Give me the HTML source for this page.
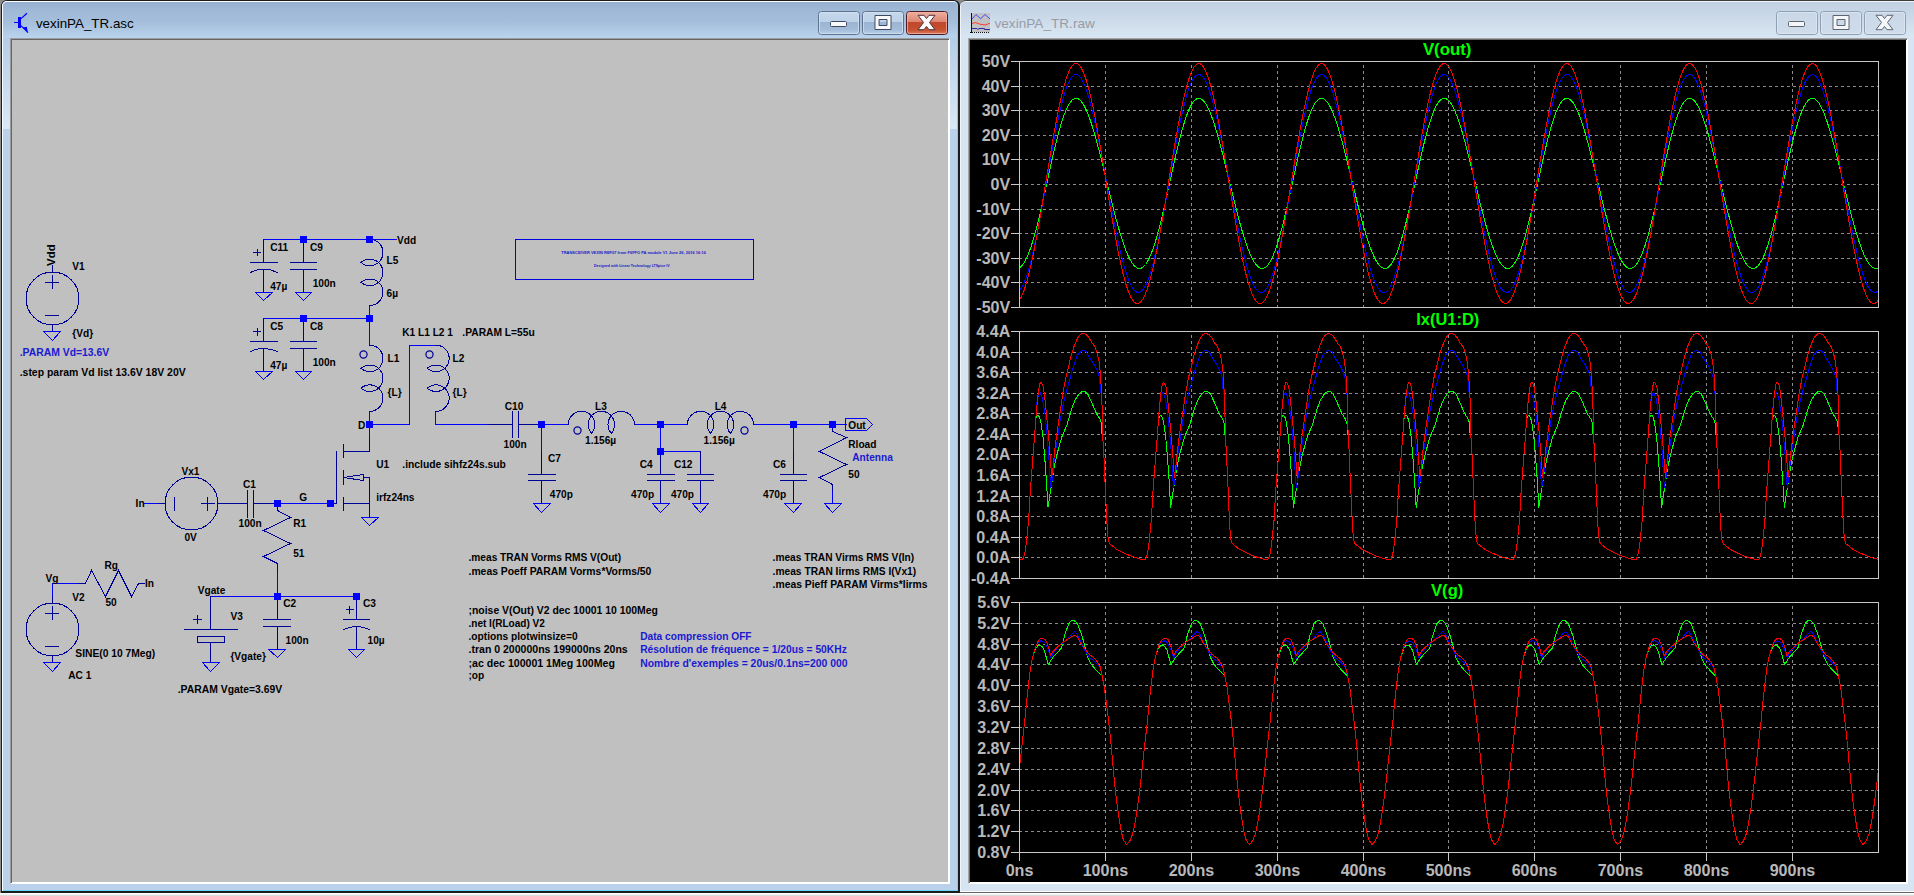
<!DOCTYPE html>
<html lang="en"><head><meta charset="utf-8"><title>vexinPA_TR - LTspice</title>
<style>
html,body{margin:0;padding:0}
body{width:1914px;height:896px;overflow:hidden;position:relative;background:#8c8c8c;font-family:"Liberation Sans",Arial,sans-serif}
.abs{position:absolute;box-sizing:border-box}
#strip{left:0;top:893px;width:1914px;height:3px;background:linear-gradient(#fff 0,#fff 34%,#f2f2f2 34%,#f2f2f2 67%,#dadada 67%)}
#lw{left:1px;top:0;width:959px;height:893px;background:#1c1c1c;border-radius:6px 6px 0 0}
#lwin{left:2px;top:1px;width:956px;height:890px;background:#b9d1ea;border-radius:5px 5px 0 0;box-shadow:inset 1px 1px 0 #fbfdff, inset -1px -1px 0 #62d8f4}
#ltitle{left:3px;top:2px;width:954px;height:36px;background:linear-gradient(#97b1d0 0,#9fb9d7 25%,#a3bdda 52%,#aec7e3 76%,#bad3ee 100%);border-radius:4px 4px 0 0}
.lgrad{top:38px;width:7px;height:91px;background:linear-gradient(#b4cde8,#dbe8f5)}
#lclient{left:10px;top:38px;width:940px;height:846px;background:#c0c0c0;border-style:solid;border-width:1px;border-color:#9c9c9c #fff #fff #9c9c9c;box-shadow:inset 1px 1px 0 #666, inset -1px -1px 0 #fff}
#rw{left:960px;top:0;width:954px;height:893px;background:#d7e4f2;border-top:1px solid #3c3c3c;border-bottom:1px solid #666;border-radius:6px 0 0 0;box-shadow:inset 1px 1px 0 #eff4fa, inset 0 -1px 0 #fff}
#rtitle{left:961px;top:2px;width:953px;height:36px;background:linear-gradient(#c2d1e2 0,#c9d7e7 35%,#d5e2ef 80%,#d8e5f2 100%);border-radius:4px 0 0 0}
#rclient{left:968px;top:38px;width:940px;height:846px;background:#000;border-style:solid;border-width:1px;border-color:#a4a4a4 #fff #fff #a4a4a4;box-shadow:inset 1px 1px 0 #6a6a6a, inset -1px -1px 0 #fff}
svg{position:absolute;left:0;top:0}
</style></head>
<body>
<div class="abs" id="strip"></div>
<div class="abs" id="lw"></div><div class="abs" id="lwin"></div><div class="abs" id="ltitle"></div><div class="abs lgrad" style="left:3px"></div><div class="abs lgrad" style="left:950px"></div><div class="abs" id="lclient"></div>
<div class="abs" id="rw"></div><div class="abs" id="rtitle"></div><div class="abs" id="rclient"></div>
<svg width="1914" height="896" viewBox="0 0 1914 896">
<defs>
<linearGradient id="g_min_a" x1="0" y1="0" x2="0" y2="1"><stop offset="0" stop-color="#c5d8ec"/><stop offset=".44" stop-color="#bdd1e8"/><stop offset=".45" stop-color="#9bb4d2"/><stop offset=".8" stop-color="#a3bcd9"/><stop offset="1" stop-color="#bdd3ea"/></linearGradient>
<linearGradient id="g_max_a" x1="0" y1="0" x2="0" y2="1"><stop offset="0" stop-color="#c5d8ec"/><stop offset=".44" stop-color="#bdd1e8"/><stop offset=".45" stop-color="#9bb4d2"/><stop offset=".8" stop-color="#a3bcd9"/><stop offset="1" stop-color="#bdd3ea"/></linearGradient>
<linearGradient id="g_close_a" x1="0" y1="0" x2="0" y2="1"><stop offset="0" stop-color="#eeb0a0"/><stop offset=".44" stop-color="#dc8672"/><stop offset=".45" stop-color="#c0462c"/><stop offset=".8" stop-color="#c5502f"/><stop offset="1" stop-color="#dc8064"/></linearGradient>
<linearGradient id="g_min_i" x1="0" y1="0" x2="0" y2="1"><stop offset="0" stop-color="#c9d7e7"/><stop offset="1" stop-color="#cfdcea"/></linearGradient>
<linearGradient id="g_max_i" x1="0" y1="0" x2="0" y2="1"><stop offset="0" stop-color="#c9d7e7"/><stop offset="1" stop-color="#cfdcea"/></linearGradient>
<linearGradient id="g_close_i" x1="0" y1="0" x2="0" y2="1"><stop offset="0" stop-color="#c9d7e7"/><stop offset="1" stop-color="#cfdcea"/></linearGradient>
</defs>
<g id="chrome">
<rect x="818.5" y="11.5" width="41" height="23" rx="3" fill="url(#g_min_a)" stroke="#5e7390"/>
<rect x="819.5" y="12.5" width="39" height="21" rx="2" fill="none" stroke="#d4e3f3" stroke-opacity=".75"/>
<rect x="830.5" y="21.5" width="16" height="5" rx="1" fill="#fafafa" stroke="#3e4a63" stroke-width="1"/>
<rect x="862.5" y="11.5" width="41" height="23" rx="3" fill="url(#g_max_a)" stroke="#5e7390"/>
<rect x="863.5" y="12.5" width="39" height="21" rx="2" fill="none" stroke="#d4e3f3" stroke-opacity=".75"/>
<path d="M875 15.5h16v14h-16z M879 19.5v6h8v-6z" fill="#fafafa" fill-rule="evenodd" stroke="#3e4a63" stroke-width="1"/>
<rect x="906.5" y="11.5" width="41" height="23" rx="3" fill="url(#g_close_a)" stroke="#4a1d26"/>
<rect x="907.5" y="12.5" width="39" height="21" rx="2" fill="none" stroke="#f0b4a4" stroke-opacity=".75"/>
<path d="M918 15.3 L924 15.3 L926.5 18.57 L929 15.3 L935 15.3 L929.5 22.5 L935 29.7 L929 29.7 L926.5 26.43 L924 29.7 L918 29.7 L923.5 22.5 Z" fill="#fafafa" stroke="#4b3340" stroke-width="1" stroke-linejoin="round"/>
<rect x="1776.5" y="11.5" width="41" height="23" rx="3" fill="url(#g_min_i)" stroke="#8f9fb3"/>
<rect x="1777.5" y="12.5" width="39" height="21" rx="2" fill="none" stroke="#dfe9f4" stroke-opacity=".75"/>
<rect x="1788.5" y="21.5" width="16" height="5" rx="1" fill="#f4f6f8" stroke="#5a6472" stroke-width="1"/>
<rect x="1820.5" y="11.5" width="41" height="23" rx="3" fill="url(#g_max_i)" stroke="#8f9fb3"/>
<rect x="1821.5" y="12.5" width="39" height="21" rx="2" fill="none" stroke="#dfe9f4" stroke-opacity=".75"/>
<path d="M1833 15.5h16v14h-16z M1837 19.5v6h8v-6z" fill="#f4f6f8" fill-rule="evenodd" stroke="#5a6472" stroke-width="1"/>
<rect x="1864.5" y="11.5" width="41" height="23" rx="3" fill="url(#g_close_i)" stroke="#8f9fb3"/>
<rect x="1865.5" y="12.5" width="39" height="21" rx="2" fill="none" stroke="#dfe9f4" stroke-opacity=".75"/>
<path d="M1876 15.3 L1882 15.3 L1884.5 18.57 L1887 15.3 L1893 15.3 L1887.5 22.5 L1893 29.7 L1887 29.7 L1884.5 26.43 L1882 29.7 L1876 29.7 L1881.5 22.5 Z" fill="#f4f6f8" stroke="#5a6472" stroke-width="1" stroke-linejoin="round"/>
<g stroke="#0000ff" fill="#0000ff" shape-rendering="crispEdges"><rect x="18" y="17" width="3.4" height="10.5" stroke="none"/><line x1="14" y1="22.5" x2="18" y2="22.5" stroke-width="1.2"/></g><g stroke="#0000ff" fill="#0000ff"><line x1="21" y1="18.6" x2="27" y2="13.2" stroke-width="1.2"/><line x1="21" y1="25.6" x2="28" y2="32.6" stroke-width="1.2"/><path d="M22.6 27.6 L26.8 26.8 L27.8 31.8 Z" stroke="none"/></g>
<g shape-rendering="crispEdges"><rect x="971" y="13" width="19" height="19" fill="#c2c2c2"/><line x1="971.5" y1="13" x2="971.5" y2="33" stroke="#111"/><line x1="970" y1="32.5" x2="990" y2="32.5" stroke="#111" stroke-dasharray="1 1"/></g><polyline points="972,19 976,14.5 980.5,18.8 985,14.5 990,19" fill="none" stroke="#4646ff" stroke-width="1"/><polyline points="972,23.5 975.5,22.5 980,24.2 985,25 990,23.2" fill="none" stroke="#ff3c3c" stroke-width="1"/><polyline points="972,28.5 977,28.5 977.8,29.5 979,28.5 984.5,28.5 984.5,29.5 990,29.5" fill="none" stroke="#2a2aa8" stroke-width="1"/>
<g font-family="'Liberation Sans',Arial,sans-serif" font-size="13.5"><text x="35.9" y="28.3" fill="#000" textLength="97.8" lengthAdjust="spacingAndGlyphs">vexinPA_TR.asc</text><text x="994.5" y="28.3" fill="#969ca6" textLength="100.3" lengthAdjust="spacingAndGlyphs">vexinPA_TR.raw</text></g>
</g>
<g id="schematic">
<g fill="none" stroke-width="1" stroke-linecap="square" shape-rendering="crispEdges">
<polyline points="263.5,239.5 396.5,239.5" stroke="#0000ff" fill="none"/>
<polyline points="263.5,318.5 369.5,318.5" stroke="#0000ff" fill="none"/>
<polyline points="369.5,305.5 369.5,345.5" stroke="#0000ff" fill="none"/>
<polyline points="369.5,411.5 369.5,437.5" stroke="#0000ff" fill="none"/>
<polyline points="369.5,424.5 409.5,424.5 409.5,345.5 435.5,345.5" stroke="#0000ff" fill="none"/>
<polyline points="435.5,411.5 435.5,424.5 488.5,424.5" stroke="#0000ff" fill="none"/>
<polyline points="541.5,424.5 568.5,424.5" stroke="#0000ff" fill="none"/>
<polyline points="541.5,424.5 541.5,451.5" stroke="#0000ff" fill="none"/>
<polyline points="634.5,424.5 687.5,424.5" stroke="#0000ff" fill="none"/>
<polyline points="660.5,424.5 660.5,451.5" stroke="#0000ff" fill="none"/>
<polyline points="660.5,451.5 700.5,451.5" stroke="#0000ff" fill="none"/>
<polyline points="753.5,424.5 846.5,424.5" stroke="#0000ff" fill="none"/>
<polyline points="793.5,424.5 793.5,451.5" stroke="#0000ff" fill="none"/>
<polyline points="832.5,490.5 832.5,503.5" stroke="#0000ff" fill="none"/>
<polyline points="277.5,503.5 330.5,503.5" stroke="#0000ff" fill="none"/>
<polyline points="277.5,570.5 277.5,596.5" stroke="#0000ff" fill="none"/>
<polyline points="210.5,596.5 356.5,596.5" stroke="#0000ff" fill="none"/>
<polyline points="52.5,596.5 52.5,583.5 78.5,583.5" stroke="#0000ff" fill="none"/>
<polyline points="144.5,503.5 158.5,503.5" stroke="#0000ff" fill="none"/>
<line x1="250.5" y1="262.5" x2="277.5" y2="262.5" stroke="#000098"/>
<line x1="263.5" y1="239.5" x2="263.5" y2="262.5" stroke="#000098"/>
<line x1="263.5" y1="269.5" x2="263.5" y2="292.5" stroke="#000098"/>
<line x1="253.5" y1="252.5" x2="260.5" y2="252.5" stroke="#000098"/>
<line x1="257.5" y1="249.5" x2="257.5" y2="255.5" stroke="#000098"/>
<path d="M 250.5 272.5 Q 263.5 265.5 277.5 272.5" stroke="#000098" fill="none"/>
<line x1="303.5" y1="269.5" x2="303.5" y2="292.5" stroke="#000098"/>
<line x1="303.5" y1="262.5" x2="303.5" y2="239.5" stroke="#000098"/>
<line x1="290.5" y1="262.5" x2="316.5" y2="262.5" stroke="#000098"/>
<line x1="290.5" y1="269.5" x2="316.5" y2="269.5" stroke="#000098"/>
<line x1="250.5" y1="341.5" x2="277.5" y2="341.5" stroke="#000098"/>
<line x1="263.5" y1="318.5" x2="263.5" y2="341.5" stroke="#000098"/>
<line x1="263.5" y1="348.5" x2="263.5" y2="371.5" stroke="#000098"/>
<line x1="253.5" y1="331.5" x2="260.5" y2="331.5" stroke="#000098"/>
<line x1="257.5" y1="328.5" x2="257.5" y2="335.5" stroke="#000098"/>
<path d="M 250.5 351.5 Q 263.5 345.5 277.5 351.5" stroke="#000098" fill="none"/>
<line x1="303.5" y1="348.5" x2="303.5" y2="371.5" stroke="#000098"/>
<line x1="303.5" y1="341.5" x2="303.5" y2="318.5" stroke="#000098"/>
<line x1="290.5" y1="341.5" x2="316.5" y2="341.5" stroke="#000098"/>
<line x1="290.5" y1="348.5" x2="316.5" y2="348.5" stroke="#000098"/>
<path d="M369.77 239.3 L371.59 239.43 L373.38 239.8 L375.09 240.42 L376.71 241.27 L378.19 242.33 L379.52 243.58 L380.66 245.01 L381.59 246.58 L382.29 248.26 L382.76 250.03 L382.98 251.84 L382.95 253.66 L382.67 255.46 L382.15 257.21 L381.39 258.87 L380.4 260.41 L379.22 261.8 L377.86 263.01 L376.34 264.02 L374.69 264.82 L372.96 265.38 L371.16 265.69 L369.34 265.76 L367.52 265.57 L365.75 265.14 L364.05 264.47 L362.46 263.57 L361.02 262.46" stroke="#000098" fill="none"/>
<path d="M361.02 262.46 L362.75 261.16 L364.68 260.17 L366.74 259.5 L368.88 259.18 L371.04 259.21 L373.17 259.6 L375.21 260.32 L377.11 261.37 L378.81 262.72 L380.26 264.32 L381.44 266.14 L382.3 268.13 L382.83 270.23 L383 272.38 L382.83 274.54 L382.3 276.64 L381.44 278.63 L380.26 280.45 L378.81 282.05 L377.11 283.4 L375.21 284.45 L373.17 285.17 L371.04 285.56 L368.88 285.59 L366.74 285.27 L364.68 284.6 L362.75 283.6 L361.02 282.31" stroke="#000098" fill="none"/>
<path d="M361.02 282.31 L362.46 281.2 L364.05 280.3 L365.75 279.63 L367.52 279.19 L369.34 279.01 L371.16 279.07 L372.96 279.39 L374.69 279.95 L376.34 280.75 L377.86 281.76 L379.22 282.97 L380.4 284.36 L381.39 285.9 L382.15 287.56 L382.67 289.3 L382.95 291.11 L382.98 292.93 L382.76 294.74 L382.29 296.51 L381.59 298.19 L380.66 299.76 L379.52 301.18 L378.19 302.44 L376.71 303.5 L375.09 304.35 L373.38 304.97 L371.59 305.34 L369.77 305.47" stroke="#000098" fill="none"/>
<path d="M369.77 345.17 L371.59 345.29 L373.38 345.67 L375.09 346.29 L376.71 347.13 L378.19 348.2 L379.52 349.45 L380.66 350.88 L381.59 352.45 L382.29 354.13 L382.76 355.89 L382.98 357.71 L382.95 359.53 L382.67 361.33 L382.15 363.08 L381.39 364.74 L380.4 366.28 L379.22 367.67 L377.86 368.88 L376.34 369.89 L374.69 370.69 L372.96 371.25 L371.16 371.56 L369.34 371.63 L367.52 371.44 L365.75 371.01 L364.05 370.34 L362.46 369.44 L361.02 368.33" stroke="#000098" fill="none"/>
<path d="M361.02 368.33 L362.75 367.03 L364.68 366.04 L366.74 365.37 L368.88 365.05 L371.04 365.08 L373.17 365.46 L375.21 366.19 L377.11 367.24 L378.81 368.59 L380.26 370.19 L381.44 372.01 L382.3 373.99 L382.83 376.09 L383 378.25 L382.83 380.41 L382.3 382.51 L381.44 384.5 L380.26 386.32 L378.81 387.92 L377.11 389.26 L375.21 390.31 L373.17 391.04 L371.04 391.42 L368.88 391.46 L366.74 391.13 L364.68 390.47 L362.75 389.47 L361.02 388.18" stroke="#000098" fill="none"/>
<path d="M361.02 388.18 L362.46 387.07 L364.05 386.17 L365.75 385.5 L367.52 385.06 L369.34 384.88 L371.16 384.94 L372.96 385.26 L374.69 385.82 L376.34 386.61 L377.86 387.63 L379.22 388.84 L380.4 390.23 L381.39 391.77 L382.15 393.42 L382.67 395.17 L382.95 396.98 L382.98 398.8 L382.76 400.61 L382.29 402.38 L381.59 404.06 L380.66 405.63 L379.52 407.05 L378.19 408.31 L376.71 409.37 L375.09 410.22 L373.38 410.84 L371.59 411.21 L369.77 411.34" stroke="#000098" fill="none"/>
<circle cx="363.5" cy="354.5" r="3.56" stroke="#000098" fill="none" shape-rendering="geometricPrecision" stroke-width="1.25"/>
<path d="M435.94 345.17 L437.76 345.29 L439.54 345.67 L441.26 346.29 L442.88 347.13 L444.36 348.2 L445.69 349.45 L446.82 350.88 L447.76 352.45 L448.46 354.13 L448.93 355.89 L449.15 357.71 L449.12 359.53 L448.84 361.33 L448.32 363.08 L447.55 364.74 L446.57 366.28 L445.39 367.67 L444.02 368.88 L442.51 369.89 L440.86 370.69 L439.13 371.25 L437.33 371.56 L435.5 371.63 L433.69 371.44 L431.92 371.01 L430.22 370.34 L428.63 369.44 L427.18 368.33" stroke="#000098" fill="none"/>
<path d="M427.18 368.33 L428.92 367.03 L430.84 366.04 L432.9 365.37 L435.05 365.05 L437.21 365.08 L439.34 365.46 L441.38 366.19 L443.28 367.24 L444.97 368.59 L446.43 370.19 L447.6 372.01 L448.47 373.99 L448.99 376.09 L449.17 378.25 L448.99 380.41 L448.47 382.51 L447.6 384.5 L446.43 386.32 L444.97 387.92 L443.28 389.26 L441.38 390.31 L439.34 391.04 L437.21 391.42 L435.05 391.46 L432.9 391.13 L430.84 390.47 L428.92 389.47 L427.18 388.18" stroke="#000098" fill="none"/>
<path d="M427.18 388.18 L428.63 387.07 L430.22 386.17 L431.92 385.5 L433.69 385.06 L435.5 384.88 L437.33 384.94 L439.13 385.26 L440.86 385.82 L442.51 386.61 L444.02 387.63 L445.39 388.84 L446.57 390.23 L447.55 391.77 L448.32 393.42 L448.84 395.17 L449.12 396.98 L449.15 398.8 L448.93 400.61 L448.46 402.38 L447.76 404.06 L446.82 405.63 L445.69 407.05 L444.36 408.31 L442.88 409.37 L441.26 410.22 L439.54 410.84 L437.76 411.21 L435.94 411.34" stroke="#000098" fill="none"/>
<circle cx="429.5" cy="354.5" r="3.56" stroke="#000098" fill="none" shape-rendering="geometricPrecision" stroke-width="1.25"/>
<line x1="518.5" y1="424.5" x2="541.5" y2="424.5" stroke="#000098"/>
<line x1="512.5" y1="424.5" x2="488.5" y2="424.5" stroke="#000098"/>
<line x1="512.5" y1="437.5" x2="512.5" y2="411.5" stroke="#000098"/>
<line x1="518.5" y1="437.5" x2="518.5" y2="411.5" stroke="#000098"/>
<line x1="541.5" y1="480.5" x2="541.5" y2="503.5" stroke="#000098"/>
<line x1="541.5" y1="474.5" x2="541.5" y2="451.5" stroke="#000098"/>
<line x1="528.5" y1="474.5" x2="555.5" y2="474.5" stroke="#000098"/>
<line x1="528.5" y1="480.5" x2="555.5" y2="480.5" stroke="#000098"/>
<path d="M568.27 424.57 L568.4 422.75 L568.77 420.96 L569.39 419.25 L570.24 417.63 L571.3 416.15 L572.56 414.82 L573.98 413.68 L575.55 412.75 L577.23 412.05 L579 411.58 L580.81 411.36 L582.63 411.38 L584.44 411.67 L586.19 412.19 L587.84 412.95 L589.38 413.94 L590.77 415.12 L591.98 416.48 L592.99 418 L593.79 419.65 L594.35 421.38 L594.67 423.18 L594.73 425 L594.55 426.82 L594.11 428.59 L593.44 430.29 L592.54 431.87 L591.43 433.32" stroke="#000098" fill="none"/>
<path d="M591.43 433.32 L590.14 431.59 L589.14 429.66 L588.48 427.6 L588.15 425.46 L588.18 423.3 L588.57 421.17 L589.3 419.13 L590.34 417.23 L591.69 415.53 L593.29 414.08 L595.11 412.9 L597.1 412.04 L599.2 411.51 L601.36 411.34 L603.52 411.51 L605.62 412.04 L607.6 412.9 L609.42 414.08 L611.02 415.53 L612.37 417.23 L613.42 419.13 L614.14 421.17 L614.53 423.3 L614.56 425.46 L614.24 427.6 L613.57 429.66 L612.58 431.59 L611.28 433.32" stroke="#000098" fill="none"/>
<path d="M611.28 433.32 L610.17 431.87 L609.27 430.29 L608.6 428.59 L608.17 426.82 L607.98 425 L608.05 423.18 L608.36 421.38 L608.92 419.65 L609.72 418 L610.73 416.48 L611.94 415.12 L613.33 413.94 L614.87 412.95 L616.53 412.19 L618.28 411.67 L620.08 411.38 L621.9 411.36 L623.72 411.58 L625.48 412.05 L627.16 412.75 L628.73 413.68 L630.16 414.82 L631.41 416.15 L632.47 417.63 L633.32 419.25 L633.94 420.96 L634.31 422.75 L634.44 424.57" stroke="#000098" fill="none"/>
<circle cx="577.5" cy="430.5" r="3.56" stroke="#000098" fill="none" shape-rendering="geometricPrecision" stroke-width="1.25"/>
<line x1="660.5" y1="480.5" x2="660.5" y2="503.5" stroke="#000098"/>
<line x1="660.5" y1="474.5" x2="660.5" y2="451.5" stroke="#000098"/>
<line x1="647.5" y1="474.5" x2="674.5" y2="474.5" stroke="#000098"/>
<line x1="647.5" y1="480.5" x2="674.5" y2="480.5" stroke="#000098"/>
<line x1="700.5" y1="480.5" x2="700.5" y2="503.5" stroke="#000098"/>
<line x1="700.5" y1="474.5" x2="700.5" y2="451.5" stroke="#000098"/>
<line x1="687.5" y1="474.5" x2="713.5" y2="474.5" stroke="#000098"/>
<line x1="687.5" y1="480.5" x2="713.5" y2="480.5" stroke="#000098"/>
<path d="M753.54 424.57 L753.42 422.75 L753.04 420.96 L752.43 419.25 L751.58 417.63 L750.52 416.15 L749.26 414.82 L747.83 413.68 L746.26 412.75 L744.58 412.05 L742.82 411.58 L741.01 411.36 L739.18 411.38 L737.38 411.67 L735.63 412.19 L733.97 412.95 L732.43 413.94 L731.05 415.12 L729.83 416.48 L728.82 418 L728.03 419.65 L727.47 421.38 L727.15 423.18 L727.08 425 L727.27 426.82 L727.7 428.59 L728.37 430.29 L729.27 431.87 L730.38 433.32" stroke="#000098" fill="none"/>
<path d="M730.38 433.32 L731.68 431.59 L732.67 429.66 L733.34 427.6 L733.66 425.46 L733.63 423.3 L733.25 421.17 L732.52 419.13 L731.47 417.23 L730.13 415.53 L728.52 414.08 L726.7 412.9 L724.72 412.04 L722.62 411.51 L720.46 411.34 L718.3 411.51 L716.2 412.04 L714.21 412.9 L712.39 414.08 L710.79 415.53 L709.45 417.23 L708.4 419.13 L707.67 421.17 L707.29 423.3 L707.26 425.46 L707.58 427.6 L708.25 429.66 L709.24 431.59 L710.53 433.32" stroke="#000098" fill="none"/>
<path d="M710.53 433.32 L711.64 431.87 L712.54 430.29 L713.22 428.59 L713.65 426.82 L713.84 425 L713.77 423.18 L713.45 421.38 L712.89 419.65 L712.1 418 L711.08 416.48 L709.87 415.12 L708.48 413.94 L706.95 412.95 L705.29 412.19 L703.54 411.67 L701.74 411.38 L699.91 411.36 L698.1 411.58 L696.34 412.05 L694.65 412.75 L693.09 413.68 L691.66 414.82 L690.4 416.15 L689.34 417.63 L688.49 419.25 L687.88 420.96 L687.5 422.75 L687.38 424.57" stroke="#000098" fill="none"/>
<circle cx="744.5" cy="430.5" r="3.56" stroke="#000098" fill="none" shape-rendering="geometricPrecision" stroke-width="1.25"/>
<line x1="793.5" y1="480.5" x2="793.5" y2="503.5" stroke="#000098"/>
<line x1="793.5" y1="474.5" x2="793.5" y2="451.5" stroke="#000098"/>
<line x1="780.5" y1="474.5" x2="806.5" y2="474.5" stroke="#000098"/>
<line x1="780.5" y1="480.5" x2="806.5" y2="480.5" stroke="#000098"/>
<polyline points="832.5,424.5 832.5,431.5 846.5,437.5 819.5,451.5 846.5,464.5 819.5,477.5 832.5,484.5 832.5,490.5" stroke="#000098" fill="none"/>
<line x1="369.5" y1="503.5" x2="369.5" y2="517.5" stroke="#000098"/>
<line x1="343.5" y1="503.5" x2="369.5" y2="503.5" stroke="#000098"/>
<line x1="369.5" y1="477.5" x2="369.5" y2="503.5" stroke="#000098"/>
<line x1="363.5" y1="477.5" x2="369.5" y2="477.5" stroke="#000098"/>
<line x1="343.5" y1="444.5" x2="343.5" y2="457.5" stroke="#000098"/>
<line x1="343.5" y1="470.5" x2="343.5" y2="484.5" stroke="#000098"/>
<line x1="343.5" y1="497.5" x2="343.5" y2="510.5" stroke="#000098"/>
<line x1="330.5" y1="503.5" x2="336.5" y2="503.5" stroke="#000098"/>
<line x1="336.5" y1="451.5" x2="336.5" y2="503.5" stroke="#000098"/>
<line x1="369.5" y1="451.5" x2="343.5" y2="451.5" stroke="#000098"/>
<line x1="369.5" y1="437.5" x2="369.5" y2="451.5" stroke="#000098"/>
<polygon points="343.5,477.5 363.5,474.5 363.5,480.5" stroke="#000098" fill="none"/>
<line x1="253.5" y1="503.5" x2="277.5" y2="503.5" stroke="#000098"/>
<line x1="247.5" y1="503.5" x2="224.5" y2="503.5" stroke="#000098"/>
<line x1="247.5" y1="517.5" x2="247.5" y2="490.5" stroke="#000098"/>
<line x1="253.5" y1="517.5" x2="253.5" y2="490.5" stroke="#000098"/>
<line x1="207.5" y1="497.5" x2="207.5" y2="510.5" stroke="#000098"/>
<line x1="174.5" y1="497.5" x2="174.5" y2="510.5" stroke="#000098"/>
<line x1="214.5" y1="503.5" x2="201.5" y2="503.5" stroke="#000098"/>
<line x1="158.5" y1="503.5" x2="164.5" y2="503.5" stroke="#000098"/>
<line x1="224.5" y1="503.5" x2="217.5" y2="503.5" stroke="#000098"/>
<circle cx="191.5" cy="503.5" r="26.47" stroke="#000098" fill="none"/>
<polyline points="277.5,503.5 277.5,510.5 290.5,517.5 263.5,530.5 290.5,543.5 263.5,556.5 277.5,563.5 277.5,570.5" stroke="#000098" fill="none"/>
<line x1="277.5" y1="626.5" x2="277.5" y2="649.5" stroke="#000098"/>
<line x1="277.5" y1="619.5" x2="277.5" y2="596.5" stroke="#000098"/>
<line x1="263.5" y1="619.5" x2="290.5" y2="619.5" stroke="#000098"/>
<line x1="263.5" y1="626.5" x2="290.5" y2="626.5" stroke="#000098"/>
<line x1="343.5" y1="619.5" x2="369.5" y2="619.5" stroke="#000098"/>
<line x1="356.5" y1="596.5" x2="356.5" y2="619.5" stroke="#000098"/>
<line x1="356.5" y1="626.5" x2="356.5" y2="649.5" stroke="#000098"/>
<line x1="346.5" y1="609.5" x2="353.5" y2="609.5" stroke="#000098"/>
<line x1="349.5" y1="606.5" x2="349.5" y2="613.5" stroke="#000098"/>
<path d="M 343.5 629.5 Q 356.5 623.5 369.5 629.5" stroke="#000098" fill="none"/>
<line x1="210.5" y1="596.5" x2="210.5" y2="629.5" stroke="#000098"/>
<line x1="184.5" y1="629.5" x2="237.5" y2="629.5" stroke="#000098"/>
<polygon points="197.5,636.5 224.5,636.5 224.5,642.5 197.5,642.5" stroke="#000098" fill="none"/>
<line x1="210.5" y1="642.5" x2="210.5" y2="662.5" stroke="#000098"/>
<line x1="193.5" y1="619.5" x2="201.5" y2="619.5" stroke="#000098"/>
<line x1="197.5" y1="615.5" x2="197.5" y2="623.5" stroke="#000098"/>
<line x1="45.5" y1="613.5" x2="58.5" y2="613.5" stroke="#000098"/>
<line x1="45.5" y1="646.5" x2="58.5" y2="646.5" stroke="#000098"/>
<line x1="52.5" y1="606.5" x2="52.5" y2="619.5" stroke="#000098"/>
<line x1="52.5" y1="662.5" x2="52.5" y2="656.5" stroke="#000098"/>
<line x1="52.5" y1="596.5" x2="52.5" y2="603.5" stroke="#000098"/>
<circle cx="52.5" cy="629.5" r="26.47" stroke="#000098" fill="none"/>
<polyline points="78.5,583.5 85.5,583.5 91.5,570.5 105.5,596.5 118.5,570.5 131.5,596.5 138.5,583.5 144.5,583.5" stroke="#000098" fill="none"/>
<line x1="45.5" y1="282.5" x2="58.5" y2="282.5" stroke="#000098"/>
<line x1="45.5" y1="315.5" x2="58.5" y2="315.5" stroke="#000098"/>
<line x1="52.5" y1="275.5" x2="52.5" y2="288.5" stroke="#000098"/>
<line x1="52.5" y1="331.5" x2="52.5" y2="325.5" stroke="#000098"/>
<line x1="52.5" y1="265.5" x2="52.5" y2="272.5" stroke="#000098"/>
<circle cx="52.5" cy="298.5" r="26.47" stroke="#000098" fill="none"/>
<polygon points="255.5,292.5 272.5,292.5 263.5,300.5" stroke="#0000ff" fill="none"/>
<polygon points="295.5,292.5 311.5,292.5 303.5,300.5" stroke="#0000ff" fill="none"/>
<polygon points="255.5,371.5 272.5,371.5 263.5,379.5" stroke="#0000ff" fill="none"/>
<polygon points="295.5,371.5 311.5,371.5 303.5,379.5" stroke="#0000ff" fill="none"/>
<polygon points="533.5,503.5 550.5,503.5 541.5,512.5" stroke="#0000ff" fill="none"/>
<polygon points="652.5,503.5 669.5,503.5 660.5,512.5" stroke="#0000ff" fill="none"/>
<polygon points="692.5,503.5 708.5,503.5 700.5,512.5" stroke="#0000ff" fill="none"/>
<polygon points="784.5,503.5 801.5,503.5 793.5,512.5" stroke="#0000ff" fill="none"/>
<polygon points="824.5,503.5 841.5,503.5 832.5,512.5" stroke="#0000ff" fill="none"/>
<polygon points="361.5,517.5 378.5,517.5 369.5,525.5" stroke="#0000ff" fill="none"/>
<polygon points="268.5,649.5 285.5,649.5 277.5,657.5" stroke="#0000ff" fill="none"/>
<polygon points="348.5,649.5 364.5,649.5 356.5,657.5" stroke="#0000ff" fill="none"/>
<polygon points="202.5,662.5 219.5,662.5 210.5,671.5" stroke="#0000ff" fill="none"/>
<polygon points="43.5,662.5 60.5,662.5 52.5,671.5" stroke="#0000ff" fill="none"/>
<polygon points="43.5,331.5 60.5,331.5 52.5,340.5" stroke="#0000ff" fill="none"/>
<rect x="300" y="236" width="7" height="7" fill="#0000ff" stroke="none"/>
<rect x="366" y="236" width="7" height="7" fill="#0000ff" stroke="none"/>
<rect x="300" y="315" width="7" height="7" fill="#0000ff" stroke="none"/>
<rect x="366" y="315" width="7" height="7" fill="#0000ff" stroke="none"/>
<rect x="366" y="421" width="7" height="7" fill="#0000ff" stroke="none"/>
<rect x="538" y="421" width="7" height="7" fill="#0000ff" stroke="none"/>
<rect x="657" y="421" width="7" height="7" fill="#0000ff" stroke="none"/>
<rect x="657" y="448" width="7" height="7" fill="#0000ff" stroke="none"/>
<rect x="790" y="421" width="7" height="7" fill="#0000ff" stroke="none"/>
<rect x="829" y="421" width="7" height="7" fill="#0000ff" stroke="none"/>
<rect x="274" y="500" width="7" height="7" fill="#0000ff" stroke="none"/>
<rect x="327" y="500" width="7" height="7" fill="#0000ff" stroke="none"/>
<rect x="274" y="593" width="7" height="7" fill="#0000ff" stroke="none"/>
<rect x="353" y="593" width="7" height="7" fill="#0000ff" stroke="none"/>
<polygon points="845.5,418.5 866.5,418.5 872.5,424.5 866.5,430.5 845.5,430.5" stroke="#0000ff" fill="none"/>
<rect x="515.5" y="239.5" width="238" height="40" stroke="#0000e0" stroke-width="1.4" fill="none"/>
</g>
<g font-family="'Liberation Sans',Arial,sans-serif" font-weight="bold" transform="translate(0,0.4)">
<text x="72.3" y="269.4" fill="#000" font-size="10.15" text-anchor="start">V1</text>
<text x="72.3" y="336.4" fill="#000" font-size="10.15" text-anchor="start">{Vd}</text>
<text x="19.7" y="355.2" fill="#1a1ad0" font-size="10.15" text-anchor="start" textLength="89.5" lengthAdjust="spacingAndGlyphs">.PARAM Vd=13.6V</text>
<text x="19.7" y="375.2" fill="#000" font-size="10.15" text-anchor="start" textLength="166" lengthAdjust="spacingAndGlyphs">.step param Vd list 13.6V 18V 20V</text>
<text transform="translate(54.6,265.5) rotate(-90)" fill="#000" font-size="10.15" textLength="21.5" lengthAdjust="spacingAndGlyphs">Vdd</text>
<text x="270.2" y="250.2" fill="#000" font-size="10.15" text-anchor="start">C11</text>
<text x="270.2" y="289.9" fill="#000" font-size="10.15" text-anchor="start">47µ</text>
<text x="309.9" y="250.2" fill="#000" font-size="10.15" text-anchor="start">C9</text>
<text x="312.7" y="286.3" fill="#000" font-size="10.15" text-anchor="start">100n</text>
<text x="397.1" y="243.2" fill="#000" font-size="10.15" text-anchor="start">Vdd</text>
<text x="386.6" y="263.3" fill="#000" font-size="10.15" text-anchor="start">L5</text>
<text x="386.6" y="296.4" fill="#000" font-size="10.15" text-anchor="start">6µ</text>
<text x="270.2" y="329.2" fill="#000" font-size="10.15" text-anchor="start">C5</text>
<text x="270.2" y="369.1" fill="#000" font-size="10.15" text-anchor="start">47µ</text>
<text x="309.9" y="329.2" fill="#000" font-size="10.15" text-anchor="start">C8</text>
<text x="312.7" y="365.3" fill="#000" font-size="10.15" text-anchor="start">100n</text>
<text x="402.3" y="336.1" fill="#000" font-size="10.15" text-anchor="start">K1 L1 L2 1</text>
<text x="462.3" y="336.1" fill="#000" font-size="10.15" text-anchor="start" textLength="72.5" lengthAdjust="spacingAndGlyphs">.PARAM L=55u</text>
<text x="387.6" y="361.3" fill="#000" font-size="10.15" text-anchor="start">L1</text>
<text x="387.6" y="395.3" fill="#000" font-size="10.15" text-anchor="start">{L}</text>
<text x="452.5" y="361.6" fill="#000" font-size="10.15" text-anchor="start">L2</text>
<text x="452.5" y="395.3" fill="#000" font-size="10.15" text-anchor="start">{L}</text>
<text x="358.1" y="428.3" fill="#000" font-size="10.15" text-anchor="start">D</text>
<text x="376.2" y="468" fill="#000" font-size="10.15" text-anchor="start">U1</text>
<text x="402.3" y="468" fill="#000" font-size="10.15" text-anchor="start" textLength="103.5" lengthAdjust="spacingAndGlyphs">.include sihfz24s.sub</text>
<text x="376.2" y="500.9" fill="#000" font-size="10.15" text-anchor="start">irfz24ns</text>
<text x="504.8" y="409.2" fill="#000" font-size="10.15" text-anchor="start">C10</text>
<text x="503.6" y="447.3" fill="#000" font-size="10.15" text-anchor="start">100n</text>
<text x="548" y="461.4" fill="#000" font-size="10.15" text-anchor="start">C7</text>
<text x="549.8" y="498.1" fill="#000" font-size="10.15" text-anchor="start">470p</text>
<text x="595" y="409.2" fill="#000" font-size="10.15" text-anchor="start">L3</text>
<text x="585" y="443.9" fill="#000" font-size="10.15" text-anchor="start">1.156µ</text>
<text x="639.8" y="468" fill="#000" font-size="10.15" text-anchor="start">C4</text>
<text x="631.1" y="498.1" fill="#000" font-size="10.15" text-anchor="start">470p</text>
<text x="673.9" y="468" fill="#000" font-size="10.15" text-anchor="start">C12</text>
<text x="670.9" y="498.1" fill="#000" font-size="10.15" text-anchor="start">470p</text>
<text x="714.7" y="409.2" fill="#000" font-size="10.15" text-anchor="start">L4</text>
<text x="703.6" y="443.9" fill="#000" font-size="10.15" text-anchor="start">1.156µ</text>
<text x="773" y="468" fill="#000" font-size="10.15" text-anchor="start">C6</text>
<text x="763" y="498.1" fill="#000" font-size="10.15" text-anchor="start">470p</text>
<text x="848.3" y="428.3" fill="#000" font-size="10.15" text-anchor="start">Out</text>
<text x="848.3" y="448.1" fill="#000" font-size="10.15" text-anchor="start">Rload</text>
<text x="852.3" y="461" fill="#1a1ad0" font-size="10.15" text-anchor="start">Antenna</text>
<text x="848.3" y="478.1" fill="#000" font-size="10.15" text-anchor="start">50</text>
<text x="181.4" y="474.9" fill="#000" font-size="10.15" text-anchor="start">Vx1</text>
<text x="184.4" y="540.3" fill="#000" font-size="10.15" text-anchor="start">0V</text>
<text x="135.6" y="507.1" fill="#000" font-size="10.15" text-anchor="start">In</text>
<text x="243" y="487.9" fill="#000" font-size="10.15" text-anchor="start">C1</text>
<text x="238.6" y="527.1" fill="#000" font-size="10.15" text-anchor="start">100n</text>
<text x="299.3" y="501" fill="#000" font-size="10.15" text-anchor="start">G</text>
<text x="293.2" y="526.7" fill="#000" font-size="10.15" text-anchor="start">R1</text>
<text x="293.2" y="556.8" fill="#000" font-size="10.15" text-anchor="start">51</text>
<text x="45.4" y="581.6" fill="#000" font-size="10.15" text-anchor="start">Vg</text>
<text x="104.4" y="568.2" fill="#000" font-size="10.15" text-anchor="start">Rg</text>
<text x="105.4" y="606" fill="#000" font-size="10.15" text-anchor="start">50</text>
<text x="72.3" y="600.4" fill="#000" font-size="10.15" text-anchor="start">V2</text>
<text x="145" y="587" fill="#000" font-size="10.15" text-anchor="start">In</text>
<text x="75.3" y="657.1" fill="#000" font-size="10.15" text-anchor="start" textLength="80" lengthAdjust="spacingAndGlyphs">SINE(0 10 7Meg)</text>
<text x="68.3" y="679.1" fill="#000" font-size="10.15" text-anchor="start">AC 1</text>
<text x="197.8" y="593.9" fill="#000" font-size="10.15" text-anchor="start">Vgate</text>
<text x="230.4" y="620.1" fill="#000" font-size="10.15" text-anchor="start">V3</text>
<text x="230.4" y="660.1" fill="#000" font-size="10.15" text-anchor="start">{Vgate}</text>
<text x="177.7" y="693.1" fill="#000" font-size="10.15" text-anchor="start" textLength="104.5" lengthAdjust="spacingAndGlyphs">.PARAM Vgate=3.69V</text>
<text x="283.2" y="607.1" fill="#000" font-size="10.15" text-anchor="start">C2</text>
<text x="285.6" y="643.6" fill="#000" font-size="10.15" text-anchor="start">100n</text>
<text x="363" y="607.1" fill="#000" font-size="10.15" text-anchor="start">C3</text>
<text x="367.6" y="643.2" fill="#000" font-size="10.15" text-anchor="start">10µ</text>
<text x="468.5" y="560.2" fill="#000" font-size="10.15" text-anchor="start" textLength="152.6" lengthAdjust="spacingAndGlyphs">.meas TRAN Vorms RMS V(Out)</text>
<text x="468.5" y="574.2" fill="#000" font-size="10.15" text-anchor="start" textLength="182.9" lengthAdjust="spacingAndGlyphs">.meas Poeff PARAM Vorms*Vorms/50</text>
<text x="468.5" y="613.4" fill="#000" font-size="10.15" text-anchor="start" textLength="189.4" lengthAdjust="spacingAndGlyphs">;noise V(Out) V2 dec 10001 10 100Meg</text>
<text x="468.5" y="626.4" fill="#000" font-size="10.15" text-anchor="start" textLength="76.3" lengthAdjust="spacingAndGlyphs">.net I(RLoad) V2</text>
<text x="468.5" y="640.1" fill="#000" font-size="10.15" text-anchor="start" textLength="109.2" lengthAdjust="spacingAndGlyphs">.options plotwinsize=0</text>
<text x="468.5" y="653.1" fill="#000" font-size="10.15" text-anchor="start" textLength="159.2" lengthAdjust="spacingAndGlyphs">.tran 0 200000ns 199000ns 20ns</text>
<text x="468.5" y="666.2" fill="#000" font-size="10.15" text-anchor="start" textLength="146.4" lengthAdjust="spacingAndGlyphs">;ac dec 100001 1Meg 100Meg</text>
<text x="468.5" y="679.1" fill="#000" font-size="10.15" text-anchor="start">;op</text>
<text x="640.2" y="640.1" fill="#1a1ad0" font-size="10.15" text-anchor="start" textLength="111.4" lengthAdjust="spacingAndGlyphs">Data compression OFF</text>
<text x="640.2" y="653.1" fill="#1a1ad0" font-size="10.15" text-anchor="start" textLength="206.6" lengthAdjust="spacingAndGlyphs">Résolution de fréquence = 1/20us = 50KHz</text>
<text x="640.2" y="666.2" fill="#1a1ad0" font-size="10.15" text-anchor="start" textLength="207.4" lengthAdjust="spacingAndGlyphs">Nombre d'exemples = 20us/0.1ns=200 000</text>
<text x="772.6" y="560.2" fill="#000" font-size="10.15" text-anchor="start" textLength="141.6" lengthAdjust="spacingAndGlyphs">.meas TRAN Virms RMS V(In)</text>
<text x="772.6" y="574.2" fill="#000" font-size="10.15" text-anchor="start" textLength="143.6" lengthAdjust="spacingAndGlyphs">.meas TRAN Iirms RMS I(Vx1)</text>
<text x="772.6" y="587.3" fill="#000" font-size="10.15" text-anchor="start" textLength="155" lengthAdjust="spacingAndGlyphs">.meas Pieff PARAM Virms*Iirms</text>
<text x="633.6" y="253.9" fill="#1818c8" font-size="3.95" text-anchor="middle" textLength="144.6" lengthAdjust="spacingAndGlyphs">TRANSCEIVER VEXIN REF07 from F6FFO  PA module  V1 June 26, 2016 16:16</text>
<text x="631.8" y="266.9" fill="#1818c8" font-size="3.95" text-anchor="middle" textLength="75.7" lengthAdjust="spacingAndGlyphs">Designed with Linear Technology LTSpice IV</text>
</g>
</g>
<g id="plots">
<defs><clipPath id="cp1"><rect x="1020" y="62" width="858" height="245"/></clipPath><clipPath id="cp2"><rect x="1020" y="332" width="858" height="246"/></clipPath><clipPath id="cp3"><rect x="1020" y="603" width="858" height="249"/></clipPath></defs>
<g shape-rendering="crispEdges" stroke-width="1"><line x1="1011" y1="61.5" x2="1019" y2="61.5" stroke="#c8c8c8"/>
<line x1="1019" y1="86.5" x2="1878" y2="86.5" stroke="#8c8c8c" stroke-dasharray="3 3"/>
<line x1="1011" y1="86.5" x2="1019" y2="86.5" stroke="#c8c8c8"/>
<line x1="1019" y1="110.5" x2="1878" y2="110.5" stroke="#8c8c8c" stroke-dasharray="3 3"/>
<line x1="1011" y1="110.5" x2="1019" y2="110.5" stroke="#c8c8c8"/>
<line x1="1019" y1="135.5" x2="1878" y2="135.5" stroke="#8c8c8c" stroke-dasharray="3 3"/>
<line x1="1011" y1="135.5" x2="1019" y2="135.5" stroke="#c8c8c8"/>
<line x1="1019" y1="159.5" x2="1878" y2="159.5" stroke="#8c8c8c" stroke-dasharray="3 3"/>
<line x1="1011" y1="159.5" x2="1019" y2="159.5" stroke="#c8c8c8"/>
<line x1="1019" y1="184.5" x2="1878" y2="184.5" stroke="#8c8c8c" stroke-dasharray="3 3"/>
<line x1="1011" y1="184.5" x2="1019" y2="184.5" stroke="#c8c8c8"/>
<line x1="1019" y1="209.5" x2="1878" y2="209.5" stroke="#8c8c8c" stroke-dasharray="3 3"/>
<line x1="1011" y1="209.5" x2="1019" y2="209.5" stroke="#c8c8c8"/>
<line x1="1019" y1="233.5" x2="1878" y2="233.5" stroke="#8c8c8c" stroke-dasharray="3 3"/>
<line x1="1011" y1="233.5" x2="1019" y2="233.5" stroke="#c8c8c8"/>
<line x1="1019" y1="258.5" x2="1878" y2="258.5" stroke="#8c8c8c" stroke-dasharray="3 3"/>
<line x1="1011" y1="258.5" x2="1019" y2="258.5" stroke="#c8c8c8"/>
<line x1="1019" y1="282.5" x2="1878" y2="282.5" stroke="#8c8c8c" stroke-dasharray="3 3"/>
<line x1="1011" y1="282.5" x2="1019" y2="282.5" stroke="#c8c8c8"/>
<line x1="1011" y1="307.5" x2="1019" y2="307.5" stroke="#c8c8c8"/>
<line x1="1105.5" y1="64.5" x2="1105.5" y2="307.5" stroke="#8c8c8c" stroke-dasharray="3 3"/>
<line x1="1191.5" y1="64.5" x2="1191.5" y2="307.5" stroke="#8c8c8c" stroke-dasharray="3 3"/>
<line x1="1277.5" y1="64.5" x2="1277.5" y2="307.5" stroke="#8c8c8c" stroke-dasharray="3 3"/>
<line x1="1363.5" y1="64.5" x2="1363.5" y2="307.5" stroke="#8c8c8c" stroke-dasharray="3 3"/>
<line x1="1448.5" y1="64.5" x2="1448.5" y2="307.5" stroke="#8c8c8c" stroke-dasharray="3 3"/>
<line x1="1534.5" y1="64.5" x2="1534.5" y2="307.5" stroke="#8c8c8c" stroke-dasharray="3 3"/>
<line x1="1620.5" y1="64.5" x2="1620.5" y2="307.5" stroke="#8c8c8c" stroke-dasharray="3 3"/>
<line x1="1706.5" y1="64.5" x2="1706.5" y2="307.5" stroke="#8c8c8c" stroke-dasharray="3 3"/>
<line x1="1792.5" y1="64.5" x2="1792.5" y2="307.5" stroke="#8c8c8c" stroke-dasharray="3 3"/>
<rect x="1019.5" y="61.5" width="859" height="246" stroke="#c8c8c8" fill="none"/>
<line x1="1011" y1="331.5" x2="1019" y2="331.5" stroke="#c8c8c8"/>
<line x1="1019" y1="352.5" x2="1878" y2="352.5" stroke="#8c8c8c" stroke-dasharray="3 3"/>
<line x1="1011" y1="352.5" x2="1019" y2="352.5" stroke="#c8c8c8"/>
<line x1="1019" y1="372.5" x2="1878" y2="372.5" stroke="#8c8c8c" stroke-dasharray="3 3"/>
<line x1="1011" y1="372.5" x2="1019" y2="372.5" stroke="#c8c8c8"/>
<line x1="1019" y1="393.5" x2="1878" y2="393.5" stroke="#8c8c8c" stroke-dasharray="3 3"/>
<line x1="1011" y1="393.5" x2="1019" y2="393.5" stroke="#c8c8c8"/>
<line x1="1019" y1="413.5" x2="1878" y2="413.5" stroke="#8c8c8c" stroke-dasharray="3 3"/>
<line x1="1011" y1="413.5" x2="1019" y2="413.5" stroke="#c8c8c8"/>
<line x1="1019" y1="434.5" x2="1878" y2="434.5" stroke="#8c8c8c" stroke-dasharray="3 3"/>
<line x1="1011" y1="434.5" x2="1019" y2="434.5" stroke="#c8c8c8"/>
<line x1="1019" y1="454.5" x2="1878" y2="454.5" stroke="#8c8c8c" stroke-dasharray="3 3"/>
<line x1="1011" y1="454.5" x2="1019" y2="454.5" stroke="#c8c8c8"/>
<line x1="1019" y1="475.5" x2="1878" y2="475.5" stroke="#8c8c8c" stroke-dasharray="3 3"/>
<line x1="1011" y1="475.5" x2="1019" y2="475.5" stroke="#c8c8c8"/>
<line x1="1019" y1="496.5" x2="1878" y2="496.5" stroke="#8c8c8c" stroke-dasharray="3 3"/>
<line x1="1011" y1="496.5" x2="1019" y2="496.5" stroke="#c8c8c8"/>
<line x1="1019" y1="516.5" x2="1878" y2="516.5" stroke="#8c8c8c" stroke-dasharray="3 3"/>
<line x1="1011" y1="516.5" x2="1019" y2="516.5" stroke="#c8c8c8"/>
<line x1="1019" y1="537.5" x2="1878" y2="537.5" stroke="#8c8c8c" stroke-dasharray="3 3"/>
<line x1="1011" y1="537.5" x2="1019" y2="537.5" stroke="#c8c8c8"/>
<line x1="1019" y1="557.5" x2="1878" y2="557.5" stroke="#8c8c8c" stroke-dasharray="3 3"/>
<line x1="1011" y1="557.5" x2="1019" y2="557.5" stroke="#c8c8c8"/>
<line x1="1011" y1="578.5" x2="1019" y2="578.5" stroke="#c8c8c8"/>
<line x1="1105.5" y1="334.5" x2="1105.5" y2="578.5" stroke="#8c8c8c" stroke-dasharray="3 3"/>
<line x1="1191.5" y1="334.5" x2="1191.5" y2="578.5" stroke="#8c8c8c" stroke-dasharray="3 3"/>
<line x1="1277.5" y1="334.5" x2="1277.5" y2="578.5" stroke="#8c8c8c" stroke-dasharray="3 3"/>
<line x1="1363.5" y1="334.5" x2="1363.5" y2="578.5" stroke="#8c8c8c" stroke-dasharray="3 3"/>
<line x1="1448.5" y1="334.5" x2="1448.5" y2="578.5" stroke="#8c8c8c" stroke-dasharray="3 3"/>
<line x1="1534.5" y1="334.5" x2="1534.5" y2="578.5" stroke="#8c8c8c" stroke-dasharray="3 3"/>
<line x1="1620.5" y1="334.5" x2="1620.5" y2="578.5" stroke="#8c8c8c" stroke-dasharray="3 3"/>
<line x1="1706.5" y1="334.5" x2="1706.5" y2="578.5" stroke="#8c8c8c" stroke-dasharray="3 3"/>
<line x1="1792.5" y1="334.5" x2="1792.5" y2="578.5" stroke="#8c8c8c" stroke-dasharray="3 3"/>
<rect x="1019.5" y="331.5" width="859" height="247" stroke="#c8c8c8" fill="none"/>
<line x1="1011" y1="602.5" x2="1019" y2="602.5" stroke="#c8c8c8"/>
<line x1="1019" y1="623.5" x2="1878" y2="623.5" stroke="#8c8c8c" stroke-dasharray="3 3"/>
<line x1="1011" y1="623.5" x2="1019" y2="623.5" stroke="#c8c8c8"/>
<line x1="1019" y1="644.5" x2="1878" y2="644.5" stroke="#8c8c8c" stroke-dasharray="3 3"/>
<line x1="1011" y1="644.5" x2="1019" y2="644.5" stroke="#c8c8c8"/>
<line x1="1019" y1="664.5" x2="1878" y2="664.5" stroke="#8c8c8c" stroke-dasharray="3 3"/>
<line x1="1011" y1="664.5" x2="1019" y2="664.5" stroke="#c8c8c8"/>
<line x1="1019" y1="685.5" x2="1878" y2="685.5" stroke="#8c8c8c" stroke-dasharray="3 3"/>
<line x1="1011" y1="685.5" x2="1019" y2="685.5" stroke="#c8c8c8"/>
<line x1="1019" y1="706.5" x2="1878" y2="706.5" stroke="#8c8c8c" stroke-dasharray="3 3"/>
<line x1="1011" y1="706.5" x2="1019" y2="706.5" stroke="#c8c8c8"/>
<line x1="1019" y1="727.5" x2="1878" y2="727.5" stroke="#8c8c8c" stroke-dasharray="3 3"/>
<line x1="1011" y1="727.5" x2="1019" y2="727.5" stroke="#c8c8c8"/>
<line x1="1019" y1="748.5" x2="1878" y2="748.5" stroke="#8c8c8c" stroke-dasharray="3 3"/>
<line x1="1011" y1="748.5" x2="1019" y2="748.5" stroke="#c8c8c8"/>
<line x1="1019" y1="769.5" x2="1878" y2="769.5" stroke="#8c8c8c" stroke-dasharray="3 3"/>
<line x1="1011" y1="769.5" x2="1019" y2="769.5" stroke="#c8c8c8"/>
<line x1="1019" y1="790.5" x2="1878" y2="790.5" stroke="#8c8c8c" stroke-dasharray="3 3"/>
<line x1="1011" y1="790.5" x2="1019" y2="790.5" stroke="#c8c8c8"/>
<line x1="1019" y1="810.5" x2="1878" y2="810.5" stroke="#8c8c8c" stroke-dasharray="3 3"/>
<line x1="1011" y1="810.5" x2="1019" y2="810.5" stroke="#c8c8c8"/>
<line x1="1019" y1="831.5" x2="1878" y2="831.5" stroke="#8c8c8c" stroke-dasharray="3 3"/>
<line x1="1011" y1="831.5" x2="1019" y2="831.5" stroke="#c8c8c8"/>
<line x1="1011" y1="852.5" x2="1019" y2="852.5" stroke="#c8c8c8"/>
<line x1="1105.5" y1="605.5" x2="1105.5" y2="852.5" stroke="#8c8c8c" stroke-dasharray="3 3"/>
<line x1="1191.5" y1="605.5" x2="1191.5" y2="852.5" stroke="#8c8c8c" stroke-dasharray="3 3"/>
<line x1="1277.5" y1="605.5" x2="1277.5" y2="852.5" stroke="#8c8c8c" stroke-dasharray="3 3"/>
<line x1="1363.5" y1="605.5" x2="1363.5" y2="852.5" stroke="#8c8c8c" stroke-dasharray="3 3"/>
<line x1="1448.5" y1="605.5" x2="1448.5" y2="852.5" stroke="#8c8c8c" stroke-dasharray="3 3"/>
<line x1="1534.5" y1="605.5" x2="1534.5" y2="852.5" stroke="#8c8c8c" stroke-dasharray="3 3"/>
<line x1="1620.5" y1="605.5" x2="1620.5" y2="852.5" stroke="#8c8c8c" stroke-dasharray="3 3"/>
<line x1="1706.5" y1="605.5" x2="1706.5" y2="852.5" stroke="#8c8c8c" stroke-dasharray="3 3"/>
<line x1="1792.5" y1="605.5" x2="1792.5" y2="852.5" stroke="#8c8c8c" stroke-dasharray="3 3"/>
<rect x="1019.5" y="602.5" width="859" height="250" stroke="#c8c8c8" fill="none"/>
<line x1="1019.5" y1="852.5" x2="1019.5" y2="861" stroke="#c8c8c8"/>
<line x1="1105.5" y1="852.5" x2="1105.5" y2="861" stroke="#c8c8c8"/>
<line x1="1191.5" y1="852.5" x2="1191.5" y2="861" stroke="#c8c8c8"/>
<line x1="1277.5" y1="852.5" x2="1277.5" y2="861" stroke="#c8c8c8"/>
<line x1="1363.5" y1="852.5" x2="1363.5" y2="861" stroke="#c8c8c8"/>
<line x1="1448.5" y1="852.5" x2="1448.5" y2="861" stroke="#c8c8c8"/>
<line x1="1534.5" y1="852.5" x2="1534.5" y2="861" stroke="#c8c8c8"/>
<line x1="1620.5" y1="852.5" x2="1620.5" y2="861" stroke="#c8c8c8"/>
<line x1="1706.5" y1="852.5" x2="1706.5" y2="861" stroke="#c8c8c8"/>
<line x1="1792.5" y1="852.5" x2="1792.5" y2="861" stroke="#c8c8c8"/></g>
<g fill="none" stroke-width="1" stroke-linejoin="round" stroke-linecap="square" shape-rendering="crispEdges"><path d="M1015 268.2 L1016.5 268.5 L1018 268.32 L1019.5 267.65 L1021 266.5 L1022.5 264.86 L1024 262.73 L1025.5 260.13 L1027 257.07 L1028.5 253.54 L1030 249.58 L1031.5 245.2 L1033 240.42 L1034.5 235.27 L1036 229.78 L1037.5 223.98 L1039 217.9 L1040.5 211.58 L1042 205.07 L1043.5 198.41 L1045 191.63 L1046.5 184.78 L1048 177.92 L1049.5 171.08 L1051 164.31 L1052.5 157.67 L1054 151.18 L1055.5 144.91 L1057 138.89 L1058.5 133.17 L1060 127.77 L1061.5 122.75 L1063 118.13 L1064.5 113.94 L1066 110.2 L1067.5 106.95 L1069 104.2 L1070.5 101.96 L1072 100.25 L1073.5 99.07 L1075 98.43 L1076.5 98.32 L1078 98.74 L1079.5 99.68 L1081 101.13 L1082.5 103.07 L1084 105.5 L1085.5 108.37 L1087 111.68 L1088.5 115.39 L1090 119.49 L1091.5 123.93 L1093 128.7 L1094.5 133.76 L1096 139.07 L1097.5 144.61 L1099 150.34 L1100.5 156.23 L1102 162.24 L1103.5 168.35 L1105 174.53 L1106.5 180.73 L1108 186.93 L1109.5 193.1 L1111 199.2 L1112.5 205.21 L1114 211.1 L1115.5 216.84 L1117 222.41 L1118.5 227.77 L1120 232.9 L1121.5 237.78 L1123 242.38 L1124.5 246.67 L1126 250.64 L1127.5 254.26 L1129 257.51 L1130.5 260.38 L1132 262.83 L1133.5 264.87 L1135 266.47 L1136.5 267.61 L1138 268.29 L1139.5 268.5 L1141 268.23 L1142.5 267.47 L1144 266.23 L1145.5 264.5 L1147 262.29 L1148.5 259.6 L1150 256.44 L1151.5 252.84 L1153 248.79 L1154.5 244.34 L1156 239.49 L1157.5 234.27 L1159 228.72 L1160.5 222.86 L1162 216.74 L1163.5 210.38 L1165 203.84 L1166.5 197.15 L1168 190.35 L1169.5 183.5 L1171 176.64 L1172.5 169.81 L1174 163.06 L1175.5 156.44 L1177 150 L1178.5 143.77 L1180 137.8 L1181.5 132.13 L1183 126.81 L1184.5 121.85 L1186 117.31 L1187.5 113.2 L1189 109.56 L1190.5 106.4 L1192 103.74 L1193.5 101.6 L1195 99.99 L1196.5 98.91 L1198 98.37 L1199.5 98.36 L1201 98.87 L1202.5 99.91 L1204 101.46 L1205.5 103.49 L1207 106 L1208.5 108.96 L1210 112.34 L1211.5 116.13 L1213 120.29 L1214.5 124.8 L1216 129.62 L1217.5 134.73 L1219 140.09 L1220.5 145.66 L1222 151.43 L1223.5 157.34 L1225 163.38 L1226.5 169.5 L1228 175.68 L1229.5 181.89 L1231 188.08 L1232.5 194.24 L1234 200.33 L1235.5 206.32 L1237 212.19 L1238.5 217.9 L1240 223.43 L1241.5 228.75 L1243 233.83 L1244.5 238.66 L1246 243.2 L1247.5 247.44 L1249 251.34 L1250.5 254.89 L1252 258.08 L1253.5 260.87 L1255 263.25 L1256.5 265.2 L1258 266.71 L1259.5 267.77 L1261 268.37 L1262.5 268.49 L1264 268.12 L1265.5 267.28 L1267 265.94 L1268.5 264.12 L1270 261.82 L1271.5 259.04 L1273 255.8 L1274.5 252.11 L1276 247.99 L1277.5 243.46 L1279 238.54 L1280.5 233.26 L1282 227.65 L1283.5 221.74 L1285 215.57 L1286.5 209.17 L1288 202.6 L1289.5 195.89 L1291 189.08 L1292.5 182.22 L1294 175.36 L1295.5 168.54 L1297 161.82 L1298.5 155.22 L1300 148.82 L1301.5 142.63 L1303 136.72 L1304.5 131.11 L1306 125.85 L1307.5 120.97 L1309 116.51 L1310.5 112.49 L1312 108.93 L1313.5 105.87 L1315 103.3 L1316.5 101.26 L1318 99.75 L1319.5 98.77 L1321 98.32 L1322.5 98.41 L1324 99.03 L1325.5 100.16 L1327 101.8 L1328.5 103.92 L1330 106.52 L1331.5 109.56 L1333 113.02 L1334.5 116.88 L1336 121.11 L1337.5 125.68 L1339 130.56 L1340.5 135.71 L1342 141.11 L1343.5 146.73 L1345 152.52 L1346.5 158.46 L1348 164.52 L1349.5 170.65 L1351 176.84 L1352.5 183.04 L1354 189.24 L1355.5 195.38 L1357 201.46 L1358.5 207.43 L1360 213.27 L1361.5 218.94 L1363 224.44 L1364.5 229.71 L1366 234.75 L1367.5 239.53 L1369 244.01 L1370.5 248.19 L1372 252.03 L1373.5 255.52 L1375 258.63 L1376.5 261.34 L1378 263.64 L1379.5 265.52 L1381 266.95 L1382.5 267.92 L1384 268.43 L1385.5 268.46 L1387 268 L1388.5 267.06 L1390 265.64 L1391.5 263.73 L1393 261.34 L1394.5 258.47 L1396 255.15 L1397.5 251.38 L1399 247.18 L1400.5 242.57 L1402 237.58 L1403.5 232.23 L1405 226.56 L1406.5 220.6 L1408 214.39 L1409.5 207.96 L1411 201.36 L1412.5 194.62 L1414 187.8 L1415.5 180.94 L1417 174.08 L1418.5 167.28 L1420 160.57 L1421.5 154.01 L1423 147.64 L1424.5 141.51 L1426 135.65 L1427.5 130.1 L1429 124.91 L1430.5 120.11 L1432 115.72 L1433.5 111.79 L1435 108.32 L1436.5 105.35 L1438 102.88 L1439.5 100.94 L1441 99.52 L1442.5 98.65 L1444 98.3 L1445.5 98.49 L1447 99.2 L1448.5 100.43 L1450 102.16 L1451.5 104.37 L1453 107.05 L1454.5 110.17 L1456 113.71 L1457.5 117.64 L1459 121.94 L1460.5 126.57 L1462 131.5 L1463.5 136.7 L1465 142.14 L1466.5 147.79 L1468 153.62 L1469.5 159.58 L1471 165.66 L1472.5 171.81 L1474 178 L1475.5 184.2 L1477 190.39 L1478.5 196.52 L1480 202.58 L1481.5 208.53 L1483 214.34 L1484.5 219.98 L1486 225.44 L1487.5 230.67 L1489 235.67 L1490.5 240.39 L1492 244.82 L1493.5 248.93 L1495 252.71 L1496.5 256.13 L1498 259.16 L1499.5 261.8 L1501 264.03 L1502.5 265.82 L1504 267.16 L1505.5 268.05 L1507 268.47 L1508.5 268.41 L1510 267.87 L1511.5 266.84 L1513 265.32 L1514.5 263.32 L1516 260.84 L1517.5 257.89 L1519 254.48 L1520.5 250.63 L1522 246.35 L1523.5 241.67 L1525 236.61 L1526.5 231.2 L1528 225.47 L1529.5 219.46 L1531 213.2 L1532.5 206.74 L1534 200.11 L1535.5 193.35 L1537 186.52 L1538.5 179.66 L1540 172.81 L1541.5 166.02 L1543 159.34 L1544.5 152.81 L1546 146.48 L1547.5 140.39 L1549 134.59 L1550.5 129.11 L1552 123.98 L1553.5 119.26 L1555 114.96 L1556.5 111.1 L1558 107.73 L1559.5 104.85 L1561 102.48 L1562.5 100.63 L1564 99.32 L1565.5 98.54 L1567 98.3 L1568.5 98.58 L1570 99.39 L1571.5 100.72 L1573 102.54 L1574.5 104.84 L1576 107.6 L1577.5 110.8 L1579 114.42 L1580.5 118.42 L1582 122.78 L1583.5 127.46 L1585 132.45 L1586.5 137.7 L1588 143.18 L1589.5 148.87 L1591 154.72 L1592.5 160.71 L1594 166.8 L1595.5 172.96 L1597 179.16 L1598.5 185.36 L1600 191.54 L1601.5 197.66 L1603 203.7 L1604.5 209.62 L1606 215.41 L1607.5 221.02 L1609 226.43 L1610.5 231.62 L1612 236.57 L1613.5 241.24 L1615 245.61 L1616.5 249.66 L1618 253.38 L1619.5 256.72 L1621 259.69 L1622.5 262.25 L1624 264.39 L1625.5 266.1 L1627 267.36 L1628.5 268.16 L1630 268.49 L1631.5 268.34 L1633 267.71 L1634.5 266.59 L1636 264.98 L1637.5 262.89 L1639 260.32 L1640.5 257.29 L1642 253.79 L1643.5 249.86 L1645 245.5 L1646.5 240.75 L1648 235.62 L1649.5 230.15 L1651 224.37 L1652.5 218.31 L1654 212.01 L1655.5 205.51 L1657 198.85 L1658.5 192.08 L1660 185.24 L1661.5 178.38 L1663 171.53 L1664.5 164.76 L1666 158.1 L1667.5 151.61 L1669 145.32 L1670.5 139.28 L1672 133.54 L1673.5 128.12 L1675 123.07 L1676.5 118.42 L1678 114.2 L1679.5 110.44 L1681 107.15 L1682.5 104.37 L1684 102.1 L1685.5 100.35 L1687 99.13 L1688.5 98.45 L1690 98.31 L1691.5 98.69 L1693 99.6 L1694.5 101.02 L1696 102.93 L1697.5 105.32 L1699 108.17 L1700.5 111.45 L1702 115.13 L1703.5 119.2 L1705 123.63 L1706.5 128.37 L1708 133.41 L1709.5 138.71 L1711 144.23 L1712.5 149.95 L1714 155.83 L1715.5 161.84 L1717 167.94 L1718.5 174.11 L1720 180.31 L1721.5 186.52 L1723 192.69 L1724.5 198.8 L1726 204.81 L1727.5 210.71 L1729 216.47 L1730.5 222.04 L1732 227.42 L1733.5 232.57 L1735 237.46 L1736.5 242.08 L1738 246.39 L1739.5 250.38 L1741 254.03 L1742.5 257.31 L1744 260.2 L1745.5 262.68 L1747 264.75 L1748.5 266.37 L1750 267.55 L1751.5 268.26 L1753 268.5 L1754.5 268.26 L1756 267.54 L1757.5 266.33 L1759 264.63 L1760.5 262.45 L1762 259.79 L1763.5 256.67 L1765 253.09 L1766.5 249.08 L1768 244.65 L1769.5 239.82 L1771 234.63 L1772.5 229.1 L1774 223.26 L1775.5 217.15 L1777 210.81 L1778.5 204.28 L1780 197.6 L1781.5 190.81 L1783 183.96 L1784.5 177.1 L1786 170.26 L1787.5 163.51 L1789 156.88 L1790.5 150.42 L1792 144.18 L1793.5 138.19 L1795 132.5 L1796.5 127.15 L1798 122.17 L1799.5 117.6 L1801 113.46 L1802.5 109.79 L1804 106.59 L1805.5 103.9 L1807 101.73 L1808.5 100.08 L1810 98.97 L1811.5 98.39 L1813 98.34 L1814.5 98.82 L1816 99.83 L1817.5 101.34 L1819 103.34 L1820.5 105.82 L1822 108.75 L1823.5 112.1 L1825 115.87 L1826.5 120 L1828 124.49 L1829.5 129.29 L1831 134.38 L1832.5 139.72 L1834 145.29 L1835.5 151.04 L1837 156.94 L1838.5 162.97 L1840 169.09 L1841.5 175.27 L1843 181.47 L1844.5 187.67 L1846 193.83 L1847.5 199.93 L1849 205.93 L1850.5 211.8 L1852 217.52 L1853.5 223.06 L1855 228.4 L1856.5 233.5 L1858 238.34 L1859.5 242.91 L1861 247.16 L1862.5 251.09 L1864 254.67 L1865.5 257.88 L1867 260.69 L1868.5 263.1 L1870 265.08 L1871.5 266.63 L1873 267.72 L1874.5 268.34 L1876 268.49 L1877.5 268.16 L1879 267.35 L1880.5 266.05" stroke="#00ff00" clip-path="url(#cp1)"/>
<path d="M1015 292.47 L1016.5 292.43 L1018 291.77 L1019.5 290.49 L1021 288.59 L1022.5 286.07 L1024 282.96 L1025.5 279.25 L1027 274.97 L1028.5 270.14 L1030 264.78 L1031.5 258.93 L1033 252.61 L1034.5 245.86 L1036 238.72 L1037.5 231.23 L1039 223.44 L1040.5 215.39 L1042 207.12 L1043.5 198.7 L1045 190.17 L1046.5 181.59 L1048 173.01 L1049.5 164.49 L1051 156.07 L1052.5 147.83 L1054 139.8 L1055.5 132.04 L1057 124.6 L1058.5 117.53 L1060 110.88 L1061.5 104.68 L1063 98.97 L1064.5 93.8 L1066 89.19 L1067.5 85.18 L1069 81.78 L1070.5 79.01 L1072 76.9 L1073.5 75.44 L1075 74.66 L1076.5 74.54 L1078 75.09 L1079.5 76.29 L1081 78.14 L1082.5 80.63 L1084 83.72 L1085.5 87.41 L1087 91.66 L1088.5 96.44 L1090 101.73 L1091.5 107.48 L1093 113.66 L1094.5 120.23 L1096 127.15 L1097.5 134.39 L1099 141.88 L1100.5 149.6 L1102 157.49 L1103.5 165.52 L1105 173.63 L1106.5 181.79 L1108 189.94 L1109.5 198.04 L1111 206.05 L1112.5 213.93 L1114 221.64 L1115.5 229.12 L1117 236.36 L1118.5 243.29 L1120 249.9 L1121.5 256.14 L1123 261.98 L1124.5 267.39 L1126 272.34 L1127.5 276.8 L1129 280.75 L1130.5 284.15 L1132 287.01 L1133.5 289.28 L1135 290.96 L1136.5 292.04 L1138 292.51 L1139.5 292.36 L1141 291.58 L1142.5 290.18 L1144 288.17 L1145.5 285.54 L1147 282.31 L1148.5 278.49 L1150 274.11 L1151.5 269.18 L1153 263.73 L1154.5 257.78 L1156 251.38 L1157.5 244.56 L1159 237.35 L1160.5 229.8 L1162 221.95 L1163.5 213.86 L1165 205.56 L1166.5 197.12 L1168 188.57 L1169.5 179.99 L1171 171.41 L1172.5 162.91 L1174 154.52 L1175.5 146.31 L1177 138.33 L1178.5 130.62 L1180 123.25 L1181.5 116.26 L1183 109.68 L1184.5 103.57 L1186 97.97 L1187.5 92.9 L1189 88.4 L1190.5 84.49 L1192 81.21 L1193.5 78.57 L1195 76.58 L1196.5 75.25 L1198 74.58 L1199.5 74.59 L1201 75.26 L1202.5 76.59 L1204 78.56 L1205.5 81.16 L1207 84.37 L1208.5 88.16 L1210 92.51 L1211.5 97.39 L1213 102.77 L1214.5 108.6 L1216 114.86 L1217.5 121.5 L1219 128.48 L1220.5 135.77 L1222 143.31 L1223.5 151.06 L1225 158.98 L1226.5 167.03 L1228 175.15 L1229.5 183.31 L1231 191.45 L1232.5 199.54 L1234 207.54 L1235.5 215.39 L1237 223.05 L1238.5 230.49 L1240 237.67 L1241.5 244.55 L1243 251.09 L1244.5 257.26 L1246 263.02 L1247.5 268.35 L1249 273.21 L1250.5 277.58 L1252 281.42 L1253.5 284.73 L1255 287.47 L1256.5 289.64 L1258 291.21 L1259.5 292.18 L1261 292.53 L1262.5 292.26 L1264 291.37 L1265.5 289.85 L1267 287.72 L1268.5 284.98 L1270 281.64 L1271.5 277.72 L1273 273.23 L1274.5 268.2 L1276 262.65 L1277.5 256.62 L1279 250.14 L1280.5 243.24 L1282 235.97 L1283.5 228.36 L1285 220.46 L1286.5 212.32 L1288 203.99 L1289.5 195.53 L1291 186.97 L1292.5 178.38 L1294 169.82 L1295.5 161.33 L1297 152.97 L1298.5 144.8 L1300 136.87 L1301.5 129.22 L1303 121.92 L1304.5 115 L1306 108.5 L1307.5 102.49 L1309 96.98 L1310.5 92.01 L1312 87.62 L1313.5 83.83 L1315 80.67 L1316.5 78.15 L1318 76.28 L1319.5 75.07 L1321 74.53 L1322.5 74.66 L1324 75.46 L1325.5 76.91 L1327 79 L1328.5 81.71 L1330 85.03 L1331.5 88.93 L1333 93.38 L1334.5 98.36 L1336 103.82 L1337.5 109.74 L1339 116.07 L1340.5 122.78 L1342 129.82 L1343.5 137.16 L1345 144.74 L1346.5 152.53 L1348 160.48 L1349.5 168.54 L1351 176.67 L1352.5 184.83 L1354 192.97 L1355.5 201.05 L1357 209.01 L1358.5 216.83 L1360 224.46 L1361.5 231.86 L1363 238.98 L1364.5 245.8 L1366 252.27 L1367.5 258.37 L1369 264.05 L1370.5 269.29 L1372 274.06 L1373.5 278.33 L1375 282.08 L1376.5 285.29 L1378 287.92 L1379.5 289.98 L1381 291.44 L1382.5 292.29 L1384 292.53 L1385.5 292.14 L1387 291.13 L1388.5 289.5 L1390 287.26 L1391.5 284.4 L1393 280.95 L1394.5 276.92 L1396 272.33 L1397.5 267.2 L1399 261.56 L1400.5 255.45 L1402 248.88 L1403.5 241.91 L1405 234.57 L1406.5 226.9 L1408 218.96 L1409.5 210.78 L1411 202.42 L1412.5 193.93 L1414 185.37 L1415.5 176.78 L1417 168.23 L1418.5 159.76 L1420 151.43 L1421.5 143.3 L1423 135.42 L1424.5 127.83 L1426 120.59 L1427.5 113.75 L1429 107.34 L1430.5 101.42 L1432 96.01 L1433.5 91.15 L1435 86.87 L1436.5 83.2 L1438 80.15 L1439.5 77.75 L1441 76 L1442.5 74.92 L1444 74.51 L1445.5 74.76 L1447 75.68 L1448.5 77.25 L1450 79.46 L1451.5 82.29 L1453 85.72 L1454.5 89.72 L1456 94.27 L1457.5 99.34 L1459 104.89 L1460.5 110.89 L1462 117.29 L1463.5 124.07 L1465 131.17 L1466.5 138.55 L1468 146.18 L1469.5 154 L1471 161.97 L1472.5 170.05 L1474 178.2 L1475.5 186.35 L1477 194.48 L1478.5 202.54 L1480 210.49 L1481.5 218.27 L1483 225.86 L1484.5 233.21 L1486 240.28 L1487.5 247.04 L1489 253.44 L1490.5 259.46 L1492 265.07 L1493.5 270.22 L1495 274.9 L1496.5 279.07 L1498 282.72 L1499.5 285.82 L1501 288.35 L1502.5 290.3 L1504 291.64 L1505.5 292.38 L1507 292.5 L1508.5 292 L1510 290.88 L1511.5 289.13 L1513 286.77 L1514.5 283.8 L1516 280.24 L1517.5 276.1 L1519 271.41 L1520.5 266.19 L1522 260.46 L1523.5 254.25 L1525 247.61 L1526.5 240.57 L1528 233.16 L1529.5 225.44 L1531 217.45 L1532.5 209.23 L1534 200.85 L1535.5 192.34 L1537 183.77 L1538.5 175.18 L1540 166.64 L1541.5 158.19 L1543 149.9 L1544.5 141.81 L1546 133.98 L1547.5 126.45 L1549 119.28 L1550.5 112.52 L1552 106.2 L1553.5 100.37 L1555 95.06 L1556.5 90.3 L1558 86.14 L1559.5 82.58 L1561 79.65 L1562.5 77.37 L1564 75.75 L1565.5 74.79 L1567 74.5 L1568.5 74.88 L1570 75.92 L1571.5 77.61 L1573 79.94 L1574.5 82.88 L1576 86.42 L1577.5 90.53 L1579 95.18 L1580.5 100.34 L1582 105.98 L1583.5 112.06 L1585 118.53 L1586.5 125.37 L1588 132.53 L1589.5 139.96 L1591 147.63 L1592.5 155.48 L1594 163.48 L1595.5 171.57 L1597 179.72 L1598.5 187.87 L1600 195.99 L1601.5 204.03 L1603 211.95 L1604.5 219.7 L1606 227.25 L1607.5 234.55 L1609 241.57 L1610.5 248.26 L1612 254.6 L1613.5 260.54 L1615 266.06 L1616.5 271.13 L1618 275.72 L1619.5 279.8 L1621 283.34 L1622.5 286.34 L1624 288.76 L1625.5 290.59 L1627 291.83 L1628.5 292.45 L1630 292.46 L1631.5 291.84 L1633 290.6 L1634.5 288.74 L1636 286.26 L1637.5 283.18 L1639 279.51 L1640.5 275.27 L1642 270.48 L1643.5 265.15 L1645 259.33 L1646.5 253.05 L1648 246.33 L1649.5 239.21 L1651 231.74 L1652.5 223.97 L1654 215.93 L1655.5 207.68 L1657 199.27 L1658.5 190.74 L1660 182.16 L1661.5 173.58 L1663 165.05 L1664.5 156.63 L1666 148.37 L1667.5 140.33 L1669 132.55 L1670.5 125.09 L1672 117.99 L1673.5 111.3 L1675 105.07 L1676.5 99.34 L1678 94.13 L1679.5 89.48 L1681 85.43 L1682.5 81.98 L1684 79.18 L1685.5 77.02 L1687 75.52 L1688.5 74.69 L1690 74.53 L1691.5 75.03 L1693 76.19 L1694.5 78 L1696 80.44 L1697.5 83.5 L1699 87.15 L1700.5 91.36 L1702 96.11 L1703.5 101.36 L1705 107.08 L1706.5 113.23 L1708 119.78 L1709.5 126.68 L1711 133.89 L1712.5 141.37 L1714 149.08 L1715.5 156.96 L1717 164.98 L1718.5 173.09 L1720 181.24 L1721.5 189.39 L1723 197.5 L1724.5 205.52 L1726 213.41 L1727.5 221.13 L1729 228.63 L1730.5 235.88 L1732 242.84 L1733.5 249.47 L1735 255.74 L1736.5 261.6 L1738 267.04 L1739.5 272.02 L1741 276.52 L1742.5 280.5 L1744 283.94 L1745.5 286.83 L1747 289.15 L1748.5 290.87 L1750 291.99 L1751.5 292.5 L1753 292.39 L1754.5 291.65 L1756 290.3 L1757.5 288.32 L1759 285.73 L1760.5 282.54 L1762 278.76 L1763.5 274.42 L1765 269.52 L1766.5 264.1 L1768 258.19 L1769.5 251.82 L1771 245.03 L1772.5 237.84 L1774 230.31 L1775.5 222.49 L1777 214.4 L1778.5 206.12 L1780 197.68 L1781.5 189.14 L1783 180.56 L1784.5 171.98 L1786 163.47 L1787.5 155.08 L1789 146.85 L1790.5 138.85 L1792 131.13 L1793.5 123.73 L1795 116.71 L1796.5 110.11 L1798 103.96 L1799.5 98.32 L1801 93.22 L1802.5 88.68 L1804 84.74 L1805.5 81.41 L1807 78.72 L1808.5 76.69 L1810 75.31 L1811.5 74.61 L1813 74.57 L1814.5 75.2 L1816 76.48 L1817.5 78.41 L1819 80.97 L1820.5 84.14 L1822 87.89 L1823.5 92.21 L1825 97.05 L1826.5 102.39 L1828 108.2 L1829.5 114.43 L1831 121.05 L1832.5 128.01 L1834 135.27 L1835.5 142.8 L1837 150.54 L1838.5 158.45 L1840 166.49 L1841.5 174.61 L1843 182.76 L1844.5 190.91 L1846 199.01 L1847.5 207.01 L1849 214.87 L1850.5 222.55 L1852 230.01 L1853.5 237.2 L1855 244.1 L1856.5 250.67 L1858 256.86 L1859.5 262.65 L1861 268.01 L1862.5 272.9 L1864 277.3 L1865.5 281.18 L1867 284.53 L1868.5 287.31 L1870 289.51 L1871.5 291.13 L1873 292.13 L1874.5 292.53 L1876 292.3 L1877.5 291.45 L1879 289.97 L1880.5 287.88" stroke="#0000ff" clip-path="url(#cp1)"/>
<path d="M1015 303.54 L1016.5 303.04 L1018 301.85 L1019.5 299.99 L1021 297.46 L1022.5 294.28 L1024 290.46 L1025.5 286.03 L1027 281.01 L1028.5 275.42 L1030 269.3 L1031.5 262.68 L1033 255.6 L1034.5 248.09 L1036 240.2 L1037.5 231.98 L1039 223.46 L1040.5 214.69 L1042 205.74 L1043.5 196.64 L1045 187.45 L1046.5 178.23 L1048 169.03 L1049.5 159.9 L1051 150.9 L1052.5 142.09 L1054 133.51 L1055.5 125.22 L1057 117.27 L1058.5 109.72 L1060 102.6 L1061.5 95.96 L1063 89.84 L1064.5 84.29 L1066 79.33 L1067.5 75.01 L1069 71.34 L1070.5 68.35 L1072 66.06 L1073.5 64.48 L1075 63.63 L1076.5 63.51 L1078 64.12 L1079.5 65.45 L1081 67.51 L1082.5 70.26 L1084 73.71 L1085.5 77.82 L1087 82.57 L1088.5 87.93 L1090 93.86 L1091.5 100.33 L1093 107.29 L1094.5 114.71 L1096 122.53 L1097.5 130.71 L1099 139.2 L1100.5 147.94 L1102 156.88 L1103.5 165.97 L1105 175.16 L1106.5 184.38 L1108 193.58 L1109.5 202.72 L1111 211.73 L1112.5 220.56 L1114 229.17 L1115.5 237.5 L1117 245.5 L1118.5 253.14 L1120 260.37 L1121.5 267.15 L1123 273.44 L1124.5 279.21 L1126 284.42 L1127.5 289.05 L1129 293.07 L1130.5 296.47 L1132 299.22 L1133.5 301.3 L1135 302.72 L1136.5 303.45 L1138 303.5 L1139.5 302.87 L1141 301.55 L1142.5 299.56 L1144 296.91 L1145.5 293.61 L1147 289.68 L1148.5 285.13 L1150 280.01 L1151.5 274.32 L1153 268.1 L1154.5 261.39 L1156 254.23 L1157.5 246.65 L1159 238.69 L1160.5 230.41 L1162 221.84 L1163.5 213.03 L1165 204.05 L1166.5 194.93 L1168 185.73 L1169.5 176.51 L1171 167.32 L1172.5 158.21 L1174 149.24 L1175.5 140.47 L1177 131.94 L1178.5 123.71 L1180 115.83 L1181.5 108.35 L1183 101.32 L1184.5 94.78 L1186 88.76 L1187.5 83.32 L1189 78.48 L1190.5 74.27 L1192 70.73 L1193.5 67.87 L1195 65.71 L1196.5 64.27 L1198 63.55 L1199.5 63.57 L1201 64.31 L1202.5 65.78 L1204 67.97 L1205.5 70.86 L1207 74.43 L1208.5 78.66 L1210 83.52 L1211.5 88.99 L1213 95.03 L1214.5 101.59 L1216 108.64 L1217.5 116.14 L1219 124.03 L1220.5 132.27 L1222 140.81 L1223.5 149.6 L1225 158.57 L1226.5 167.68 L1228 176.88 L1229.5 186.1 L1231 195.29 L1232.5 204.41 L1234 213.39 L1235.5 222.18 L1237 230.74 L1238.5 239.02 L1240 246.96 L1241.5 254.52 L1243 261.67 L1244.5 268.36 L1246 274.56 L1247.5 280.22 L1249 285.33 L1250.5 289.85 L1252 293.76 L1253.5 297.03 L1255 299.66 L1256.5 301.62 L1258 302.91 L1259.5 303.51 L1261 303.44 L1262.5 302.67 L1264 301.23 L1265.5 299.12 L1267 296.34 L1268.5 292.92 L1270 288.88 L1271.5 284.22 L1273 278.99 L1274.5 273.2 L1276 266.89 L1277.5 260.09 L1279 252.85 L1280.5 245.19 L1282 237.17 L1283.5 228.83 L1285 220.21 L1286.5 211.37 L1288 202.35 L1289.5 193.21 L1291 184.01 L1292.5 174.79 L1294 165.61 L1295.5 156.52 L1297 147.59 L1298.5 138.85 L1300 130.38 L1301.5 122.21 L1303 114.4 L1304.5 107 L1306 100.06 L1307.5 93.61 L1309 87.7 L1310.5 82.37 L1312 77.64 L1313.5 73.56 L1315 70.14 L1316.5 67.41 L1318 65.39 L1319.5 64.08 L1321 63.5 L1322.5 63.65 L1324 64.53 L1325.5 66.14 L1327 68.45 L1328.5 71.47 L1330 75.17 L1331.5 79.52 L1333 84.5 L1334.5 90.08 L1336 96.21 L1337.5 102.87 L1339 110.01 L1340.5 117.58 L1342 125.55 L1343.5 133.85 L1345 142.43 L1346.5 151.26 L1348 160.26 L1349.5 169.39 L1351 178.6 L1352.5 187.82 L1354 197 L1355.5 206.1 L1357 215.05 L1358.5 223.8 L1360 232.31 L1361.5 240.53 L1363 248.4 L1364.5 255.89 L1366 262.96 L1367.5 269.56 L1369 275.65 L1370.5 281.22 L1372 286.22 L1373.5 290.62 L1375 294.42 L1376.5 297.57 L1378 300.07 L1379.5 301.91 L1381 303.07 L1382.5 303.55 L1384 303.34 L1385.5 302.46 L1387 300.89 L1388.5 298.65 L1390 295.75 L1391.5 292.22 L1393 288.05 L1394.5 283.29 L1396 277.95 L1397.5 272.06 L1399 265.65 L1400.5 258.77 L1402 251.45 L1403.5 243.72 L1405 235.63 L1406.5 227.24 L1408 218.58 L1409.5 209.7 L1411 200.65 L1412.5 191.5 L1414 182.29 L1415.5 173.07 L1417 163.9 L1418.5 154.84 L1420 145.94 L1421.5 137.25 L1423 128.83 L1424.5 120.73 L1426 112.99 L1427.5 105.67 L1429 98.82 L1430.5 92.47 L1432 86.66 L1433.5 81.44 L1435 76.83 L1436.5 72.87 L1438 69.58 L1439.5 66.98 L1441 65.09 L1442.5 63.92 L1444 63.47 L1445.5 63.76 L1447 64.78 L1448.5 66.52 L1450 68.97 L1451.5 72.11 L1453 75.93 L1454.5 80.4 L1456 85.5 L1457.5 91.18 L1459 97.42 L1460.5 104.17 L1462 111.39 L1463.5 119.04 L1465 127.07 L1466.5 135.43 L1468 144.07 L1469.5 152.93 L1471 161.96 L1472.5 171.11 L1474 180.32 L1475.5 189.54 L1477 198.71 L1478.5 207.78 L1480 216.7 L1481.5 225.41 L1483 233.87 L1484.5 242.02 L1486 249.83 L1487.5 257.24 L1489 264.23 L1490.5 270.73 L1492 276.73 L1493.5 282.2 L1495 287.09 L1496.5 291.38 L1498 295.05 L1499.5 298.09 L1501 300.47 L1502.5 302.18 L1504 303.21 L1505.5 303.56 L1507 303.23 L1508.5 302.21 L1510 300.52 L1511.5 298.16 L1513 295.14 L1514.5 291.49 L1516 287.21 L1517.5 282.33 L1519 276.89 L1520.5 270.9 L1522 264.41 L1523.5 257.44 L1525 250.03 L1526.5 242.24 L1528 234.09 L1529.5 225.64 L1531 216.93 L1532.5 208.02 L1534 198.95 L1535.5 189.78 L1537 180.56 L1538.5 171.35 L1540 162.2 L1541.5 153.17 L1543 144.3 L1544.5 135.66 L1546 127.29 L1547.5 119.25 L1549 111.59 L1550.5 104.36 L1552 97.59 L1553.5 91.34 L1555 85.64 L1556.5 80.53 L1558 76.04 L1559.5 72.2 L1561 69.04 L1562.5 66.57 L1564 64.81 L1565.5 63.78 L1567 63.47 L1568.5 63.89 L1570 65.05 L1571.5 66.92 L1573 69.5 L1574.5 72.77 L1576 76.72 L1577.5 81.31 L1579 86.51 L1580.5 92.3 L1582 98.64 L1583.5 105.48 L1585 112.79 L1586.5 120.51 L1588 128.61 L1589.5 137.02 L1591 145.7 L1592.5 154.6 L1594 163.66 L1595.5 172.82 L1597 182.04 L1598.5 191.25 L1600 200.41 L1601.5 209.46 L1603 218.34 L1604.5 227.01 L1606 235.41 L1607.5 243.51 L1609 251.25 L1610.5 258.58 L1612 265.48 L1613.5 271.89 L1615 277.8 L1616.5 283.15 L1618 287.93 L1619.5 292.11 L1621 295.67 L1622.5 298.58 L1624 300.84 L1625.5 302.42 L1627 303.33 L1628.5 303.55 L1630 303.09 L1631.5 301.95 L1633 300.13 L1634.5 297.65 L1636 294.51 L1637.5 290.73 L1639 286.34 L1640.5 281.36 L1642 275.81 L1643.5 269.73 L1645 263.14 L1646.5 256.09 L1648 248.61 L1649.5 240.74 L1651 232.53 L1652.5 224.03 L1654 215.28 L1655.5 206.34 L1657 197.25 L1658.5 188.06 L1660 178.84 L1661.5 169.64 L1663 160.5 L1664.5 151.5 L1666 142.67 L1667.5 134.07 L1669 125.76 L1670.5 117.79 L1672 110.21 L1673.5 103.06 L1675 96.38 L1676.5 90.23 L1678 84.64 L1679.5 79.65 L1681 75.28 L1682.5 71.56 L1684 68.53 L1685.5 66.19 L1687 64.56 L1688.5 63.66 L1690 63.49 L1691.5 64.05 L1693 65.34 L1694.5 67.35 L1696 70.06 L1697.5 73.46 L1699 77.53 L1700.5 82.23 L1702 87.55 L1703.5 93.45 L1705 99.88 L1706.5 106.81 L1708 114.2 L1709.5 122 L1711 130.16 L1712.5 138.62 L1714 147.35 L1715.5 156.28 L1717 165.36 L1718.5 174.54 L1720 183.76 L1721.5 192.97 L1723 202.11 L1724.5 211.13 L1726 219.98 L1727.5 228.6 L1729 236.95 L1730.5 244.98 L1732 252.65 L1733.5 259.9 L1735 266.71 L1736.5 273.04 L1738 278.84 L1739.5 284.09 L1741 288.76 L1742.5 292.82 L1744 296.26 L1745.5 299.05 L1747 301.18 L1748.5 302.64 L1750 303.42 L1751.5 303.52 L1753 302.93 L1754.5 301.66 L1756 299.72 L1757.5 297.11 L1759 293.85 L1760.5 289.96 L1762 285.46 L1763.5 280.37 L1765 274.71 L1766.5 268.53 L1768 261.86 L1769.5 254.72 L1771 247.17 L1772.5 239.23 L1774 230.97 L1775.5 222.42 L1777 213.63 L1778.5 204.65 L1780 195.54 L1781.5 186.34 L1783 177.12 L1784.5 167.93 L1786 158.81 L1787.5 149.83 L1789 141.04 L1790.5 132.5 L1792 124.25 L1793.5 116.35 L1795 108.84 L1796.5 101.77 L1798 95.2 L1799.5 89.15 L1801 83.66 L1802.5 78.78 L1804 74.53 L1805.5 70.94 L1807 68.04 L1808.5 65.83 L1810 64.34 L1811.5 63.58 L1813 63.54 L1814.5 64.24 L1816 65.66 L1817.5 67.8 L1819 70.64 L1820.5 74.17 L1822 78.36 L1823.5 83.18 L1825 88.61 L1826.5 94.61 L1828 101.14 L1829.5 108.16 L1831 115.63 L1832.5 123.49 L1834 131.71 L1835.5 140.23 L1837 149 L1838.5 157.97 L1840 167.07 L1841.5 176.26 L1843 185.48 L1844.5 194.68 L1846 203.8 L1847.5 212.8 L1849 221.61 L1850.5 230.18 L1852 238.48 L1853.5 246.44 L1855 254.03 L1856.5 261.21 L1858 267.93 L1859.5 274.16 L1861 279.86 L1862.5 285.01 L1864 289.56 L1865.5 293.51 L1867 296.83 L1868.5 299.5 L1870 301.51 L1871.5 302.84 L1873 303.49 L1874.5 303.46 L1876 302.75 L1877.5 301.35 L1879 299.28 L1880.5 296.55" stroke="#ff0000" clip-path="url(#cp1)"/>
<path d="M896.88 559.5 L899.78 559.5 L901.18 556.5 L902.48 551 L903.78 541 L905.18 527 L905.88 520.2 L907.58 490.7 L909.68 463.8 L911.78 437 L913.08 418.6 L914.28 416 L915.58 415.2 L916.88 417.5 L918.08 422 L920.28 437 L921.98 457.1 L923.68 480.6 L925.28 507.4 L927.28 494 L928.98 484 L931.48 467.2 L934.38 453.8 L939.08 437 L944.08 425.3 L949.08 408.5 L952.38 400 L956.28 393.9 L958.88 391.8 L960.68 391.3 L962.68 392 L964.98 393.9 L969.38 403.3 L973.68 413.5 L977.38 419.3 L978.88 423.6 L979.18 433.8 L979.98 435.2 L980.68 448.3 L980.98 450 L981.68 468.9 L982.68 489.2 L983.58 510.9 L984.58 529.8 L985.58 539.9 L986.78 543.6 L993.98 549.4 L1001.28 553 L1008.48 556.2 L1015.78 558.5 L1019.6 559.5 L1022.5 559.5 L1023.9 556.5 L1025.2 551 L1026.5 541 L1027.9 527 L1028.6 520.2 L1030.3 490.7 L1032.4 463.8 L1034.5 437 L1035.8 418.6 L1037 416 L1038.3 415.2 L1039.6 417.5 L1040.8 422 L1043 437 L1044.7 457.1 L1046.4 480.6 L1048 507.4 L1050 494 L1051.7 484 L1054.2 467.2 L1057.1 453.8 L1061.8 437 L1066.8 425.3 L1071.8 408.5 L1075.1 400 L1079 393.9 L1081.6 391.8 L1083.4 391.3 L1085.4 392 L1087.7 393.9 L1092.1 403.3 L1096.4 413.5 L1100.1 419.3 L1101.6 423.6 L1101.9 433.8 L1102.7 435.2 L1103.4 448.3 L1103.7 450 L1104.4 468.9 L1105.4 489.2 L1106.3 510.9 L1107.3 529.8 L1108.3 539.9 L1109.5 543.6 L1116.7 549.4 L1124 553 L1131.2 556.2 L1138.5 558.5 L1142.32 559.5 L1145.22 559.5 L1146.62 556.5 L1147.92 551 L1149.22 541 L1150.62 527 L1151.32 520.2 L1153.02 490.7 L1155.12 463.8 L1157.22 437 L1158.52 418.6 L1159.72 416 L1161.02 415.2 L1162.32 417.5 L1163.52 422 L1165.72 437 L1167.42 457.1 L1169.12 480.6 L1170.72 507.4 L1172.72 494 L1174.42 484 L1176.92 467.2 L1179.82 453.8 L1184.52 437 L1189.52 425.3 L1194.52 408.5 L1197.82 400 L1201.72 393.9 L1204.32 391.8 L1206.12 391.3 L1208.12 392 L1210.42 393.9 L1214.82 403.3 L1219.12 413.5 L1222.82 419.3 L1224.32 423.6 L1224.62 433.8 L1225.42 435.2 L1226.12 448.3 L1226.42 450 L1227.12 468.9 L1228.12 489.2 L1229.02 510.9 L1230.02 529.8 L1231.02 539.9 L1232.22 543.6 L1239.42 549.4 L1246.72 553 L1253.92 556.2 L1261.22 558.5 L1265.04 559.5 L1267.94 559.5 L1269.34 556.5 L1270.64 551 L1271.94 541 L1273.34 527 L1274.04 520.2 L1275.74 490.7 L1277.84 463.8 L1279.94 437 L1281.24 418.6 L1282.44 416 L1283.74 415.2 L1285.04 417.5 L1286.24 422 L1288.44 437 L1290.14 457.1 L1291.84 480.6 L1293.44 507.4 L1295.44 494 L1297.14 484 L1299.64 467.2 L1302.54 453.8 L1307.24 437 L1312.24 425.3 L1317.24 408.5 L1320.54 400 L1324.44 393.9 L1327.04 391.8 L1328.84 391.3 L1330.84 392 L1333.14 393.9 L1337.54 403.3 L1341.84 413.5 L1345.54 419.3 L1347.04 423.6 L1347.34 433.8 L1348.14 435.2 L1348.84 448.3 L1349.14 450 L1349.84 468.9 L1350.84 489.2 L1351.74 510.9 L1352.74 529.8 L1353.74 539.9 L1354.94 543.6 L1362.14 549.4 L1369.44 553 L1376.64 556.2 L1383.94 558.5 L1387.76 559.5 L1390.66 559.5 L1392.06 556.5 L1393.36 551 L1394.66 541 L1396.06 527 L1396.76 520.2 L1398.46 490.7 L1400.56 463.8 L1402.66 437 L1403.96 418.6 L1405.16 416 L1406.46 415.2 L1407.76 417.5 L1408.96 422 L1411.16 437 L1412.86 457.1 L1414.56 480.6 L1416.16 507.4 L1418.16 494 L1419.86 484 L1422.36 467.2 L1425.26 453.8 L1429.96 437 L1434.96 425.3 L1439.96 408.5 L1443.26 400 L1447.16 393.9 L1449.76 391.8 L1451.56 391.3 L1453.56 392 L1455.86 393.9 L1460.26 403.3 L1464.56 413.5 L1468.26 419.3 L1469.76 423.6 L1470.06 433.8 L1470.86 435.2 L1471.56 448.3 L1471.86 450 L1472.56 468.9 L1473.56 489.2 L1474.46 510.9 L1475.46 529.8 L1476.46 539.9 L1477.66 543.6 L1484.86 549.4 L1492.16 553 L1499.36 556.2 L1506.66 558.5 L1510.48 559.5 L1513.38 559.5 L1514.78 556.5 L1516.08 551 L1517.38 541 L1518.78 527 L1519.48 520.2 L1521.18 490.7 L1523.28 463.8 L1525.38 437 L1526.68 418.6 L1527.88 416 L1529.18 415.2 L1530.48 417.5 L1531.68 422 L1533.88 437 L1535.58 457.1 L1537.28 480.6 L1538.88 507.4 L1540.88 494 L1542.58 484 L1545.08 467.2 L1547.98 453.8 L1552.68 437 L1557.68 425.3 L1562.68 408.5 L1565.98 400 L1569.88 393.9 L1572.48 391.8 L1574.28 391.3 L1576.28 392 L1578.58 393.9 L1582.98 403.3 L1587.28 413.5 L1590.98 419.3 L1592.48 423.6 L1592.78 433.8 L1593.58 435.2 L1594.28 448.3 L1594.58 450 L1595.28 468.9 L1596.28 489.2 L1597.18 510.9 L1598.18 529.8 L1599.18 539.9 L1600.38 543.6 L1607.58 549.4 L1614.88 553 L1622.08 556.2 L1629.38 558.5 L1633.2 559.5 L1636.1 559.5 L1637.5 556.5 L1638.8 551 L1640.1 541 L1641.5 527 L1642.2 520.2 L1643.9 490.7 L1646 463.8 L1648.1 437 L1649.4 418.6 L1650.6 416 L1651.9 415.2 L1653.2 417.5 L1654.4 422 L1656.6 437 L1658.3 457.1 L1660 480.6 L1661.6 507.4 L1663.6 494 L1665.3 484 L1667.8 467.2 L1670.7 453.8 L1675.4 437 L1680.4 425.3 L1685.4 408.5 L1688.7 400 L1692.6 393.9 L1695.2 391.8 L1697 391.3 L1699 392 L1701.3 393.9 L1705.7 403.3 L1710 413.5 L1713.7 419.3 L1715.2 423.6 L1715.5 433.8 L1716.3 435.2 L1717 448.3 L1717.3 450 L1718 468.9 L1719 489.2 L1719.9 510.9 L1720.9 529.8 L1721.9 539.9 L1723.1 543.6 L1730.3 549.4 L1737.6 553 L1744.8 556.2 L1752.1 558.5 L1755.92 559.5 L1758.82 559.5 L1760.22 556.5 L1761.52 551 L1762.82 541 L1764.22 527 L1764.92 520.2 L1766.62 490.7 L1768.72 463.8 L1770.82 437 L1772.12 418.6 L1773.32 416 L1774.62 415.2 L1775.92 417.5 L1777.12 422 L1779.32 437 L1781.02 457.1 L1782.72 480.6 L1784.32 507.4 L1786.32 494 L1788.02 484 L1790.52 467.2 L1793.42 453.8 L1798.12 437 L1803.12 425.3 L1808.12 408.5 L1811.42 400 L1815.32 393.9 L1817.92 391.8 L1819.72 391.3 L1821.72 392 L1824.02 393.9 L1828.42 403.3 L1832.72 413.5 L1836.42 419.3 L1837.92 423.6 L1838.22 433.8 L1839.02 435.2 L1839.72 448.3 L1840.02 450 L1840.72 468.9 L1841.72 489.2 L1842.62 510.9 L1843.62 529.8 L1844.62 539.9 L1845.82 543.6 L1853.02 549.4 L1860.32 553 L1867.52 556.2 L1874.82 558.5 L1878.64 559.5 L1881.54 559.5 L1882.94 556.5 L1884.24 551 L1885.54 541 L1886.94 527 L1887.64 520.2 L1889.34 490.7 L1891.44 463.8 L1893.54 437 L1894.84 418.6 L1896.04 416 L1897.34 415.2 L1898.64 417.5 L1899.84 422 L1902.04 437 L1903.74 457.1 L1905.44 480.6 L1907.04 507.4 L1909.04 494 L1910.74 484 L1913.24 467.2 L1916.14 453.8 L1920.84 437 L1925.84 425.3 L1930.84 408.5 L1934.14 400 L1938.04 393.9 L1940.64 391.8 L1942.44 391.3 L1944.44 392 L1946.74 393.9 L1951.14 403.3 L1955.44 413.5 L1959.14 419.3 L1960.64 423.6 L1960.94 433.8 L1961.74 435.2 L1962.44 448.3 L1962.74 450 L1963.44 468.9 L1964.44 489.2 L1965.34 510.9 L1966.34 529.8 L1967.34 539.9 L1968.54 543.6 L1975.74 549.4 L1983.04 553 L1990.24 556.2 L1997.54 558.5" stroke="#00ff00" clip-path="url(#cp2)"/>
<path d="M896.88 559.5 L899.78 559.5 L901.18 556.5 L902.48 551 L903.78 541 L905.18 527 L905.88 520.2 L907.58 490.7 L909.68 463.8 L911.78 437 L913.58 411.9 L914.48 400 L916.18 394 L917.58 392.6 L919.78 398.5 L922.28 413.6 L924.28 433.7 L925.98 453.8 L927.28 477.3 L928.18 487.3 L929.88 477.3 L931.48 460.5 L933.98 443.7 L937.38 420.3 L940.68 403.5 L944.08 390.1 L946.88 380 L950.48 367 L954.88 354.7 L958.48 351.1 L960.68 350.4 L963.58 351.8 L967.18 358.4 L971.58 364.9 L975.18 372.1 L977.08 378.7 L977.48 388.8 L979.08 396.1 L979.48 412 L979.98 435.2 L980.68 448.3 L980.98 450 L981.68 468.9 L982.68 489.2 L983.58 510.9 L984.58 529.8 L985.58 539.9 L986.78 543.6 L993.98 549.4 L1001.28 553 L1008.48 556.2 L1015.78 558.5 L1019.6 559.5 L1022.5 559.5 L1023.9 556.5 L1025.2 551 L1026.5 541 L1027.9 527 L1028.6 520.2 L1030.3 490.7 L1032.4 463.8 L1034.5 437 L1036.3 411.9 L1037.2 400 L1038.9 394 L1040.3 392.6 L1042.5 398.5 L1045 413.6 L1047 433.7 L1048.7 453.8 L1050 477.3 L1050.9 487.3 L1052.6 477.3 L1054.2 460.5 L1056.7 443.7 L1060.1 420.3 L1063.4 403.5 L1066.8 390.1 L1069.6 380 L1073.2 367 L1077.6 354.7 L1081.2 351.1 L1083.4 350.4 L1086.3 351.8 L1089.9 358.4 L1094.3 364.9 L1097.9 372.1 L1099.8 378.7 L1100.2 388.8 L1101.8 396.1 L1102.2 412 L1102.7 435.2 L1103.4 448.3 L1103.7 450 L1104.4 468.9 L1105.4 489.2 L1106.3 510.9 L1107.3 529.8 L1108.3 539.9 L1109.5 543.6 L1116.7 549.4 L1124 553 L1131.2 556.2 L1138.5 558.5 L1142.32 559.5 L1145.22 559.5 L1146.62 556.5 L1147.92 551 L1149.22 541 L1150.62 527 L1151.32 520.2 L1153.02 490.7 L1155.12 463.8 L1157.22 437 L1159.02 411.9 L1159.92 400 L1161.62 394 L1163.02 392.6 L1165.22 398.5 L1167.72 413.6 L1169.72 433.7 L1171.42 453.8 L1172.72 477.3 L1173.62 487.3 L1175.32 477.3 L1176.92 460.5 L1179.42 443.7 L1182.82 420.3 L1186.12 403.5 L1189.52 390.1 L1192.32 380 L1195.92 367 L1200.32 354.7 L1203.92 351.1 L1206.12 350.4 L1209.02 351.8 L1212.62 358.4 L1217.02 364.9 L1220.62 372.1 L1222.52 378.7 L1222.92 388.8 L1224.52 396.1 L1224.92 412 L1225.42 435.2 L1226.12 448.3 L1226.42 450 L1227.12 468.9 L1228.12 489.2 L1229.02 510.9 L1230.02 529.8 L1231.02 539.9 L1232.22 543.6 L1239.42 549.4 L1246.72 553 L1253.92 556.2 L1261.22 558.5 L1265.04 559.5 L1267.94 559.5 L1269.34 556.5 L1270.64 551 L1271.94 541 L1273.34 527 L1274.04 520.2 L1275.74 490.7 L1277.84 463.8 L1279.94 437 L1281.74 411.9 L1282.64 400 L1284.34 394 L1285.74 392.6 L1287.94 398.5 L1290.44 413.6 L1292.44 433.7 L1294.14 453.8 L1295.44 477.3 L1296.34 487.3 L1298.04 477.3 L1299.64 460.5 L1302.14 443.7 L1305.54 420.3 L1308.84 403.5 L1312.24 390.1 L1315.04 380 L1318.64 367 L1323.04 354.7 L1326.64 351.1 L1328.84 350.4 L1331.74 351.8 L1335.34 358.4 L1339.74 364.9 L1343.34 372.1 L1345.24 378.7 L1345.64 388.8 L1347.24 396.1 L1347.64 412 L1348.14 435.2 L1348.84 448.3 L1349.14 450 L1349.84 468.9 L1350.84 489.2 L1351.74 510.9 L1352.74 529.8 L1353.74 539.9 L1354.94 543.6 L1362.14 549.4 L1369.44 553 L1376.64 556.2 L1383.94 558.5 L1387.76 559.5 L1390.66 559.5 L1392.06 556.5 L1393.36 551 L1394.66 541 L1396.06 527 L1396.76 520.2 L1398.46 490.7 L1400.56 463.8 L1402.66 437 L1404.46 411.9 L1405.36 400 L1407.06 394 L1408.46 392.6 L1410.66 398.5 L1413.16 413.6 L1415.16 433.7 L1416.86 453.8 L1418.16 477.3 L1419.06 487.3 L1420.76 477.3 L1422.36 460.5 L1424.86 443.7 L1428.26 420.3 L1431.56 403.5 L1434.96 390.1 L1437.76 380 L1441.36 367 L1445.76 354.7 L1449.36 351.1 L1451.56 350.4 L1454.46 351.8 L1458.06 358.4 L1462.46 364.9 L1466.06 372.1 L1467.96 378.7 L1468.36 388.8 L1469.96 396.1 L1470.36 412 L1470.86 435.2 L1471.56 448.3 L1471.86 450 L1472.56 468.9 L1473.56 489.2 L1474.46 510.9 L1475.46 529.8 L1476.46 539.9 L1477.66 543.6 L1484.86 549.4 L1492.16 553 L1499.36 556.2 L1506.66 558.5 L1510.48 559.5 L1513.38 559.5 L1514.78 556.5 L1516.08 551 L1517.38 541 L1518.78 527 L1519.48 520.2 L1521.18 490.7 L1523.28 463.8 L1525.38 437 L1527.18 411.9 L1528.08 400 L1529.78 394 L1531.18 392.6 L1533.38 398.5 L1535.88 413.6 L1537.88 433.7 L1539.58 453.8 L1540.88 477.3 L1541.78 487.3 L1543.48 477.3 L1545.08 460.5 L1547.58 443.7 L1550.98 420.3 L1554.28 403.5 L1557.68 390.1 L1560.48 380 L1564.08 367 L1568.48 354.7 L1572.08 351.1 L1574.28 350.4 L1577.18 351.8 L1580.78 358.4 L1585.18 364.9 L1588.78 372.1 L1590.68 378.7 L1591.08 388.8 L1592.68 396.1 L1593.08 412 L1593.58 435.2 L1594.28 448.3 L1594.58 450 L1595.28 468.9 L1596.28 489.2 L1597.18 510.9 L1598.18 529.8 L1599.18 539.9 L1600.38 543.6 L1607.58 549.4 L1614.88 553 L1622.08 556.2 L1629.38 558.5 L1633.2 559.5 L1636.1 559.5 L1637.5 556.5 L1638.8 551 L1640.1 541 L1641.5 527 L1642.2 520.2 L1643.9 490.7 L1646 463.8 L1648.1 437 L1649.9 411.9 L1650.8 400 L1652.5 394 L1653.9 392.6 L1656.1 398.5 L1658.6 413.6 L1660.6 433.7 L1662.3 453.8 L1663.6 477.3 L1664.5 487.3 L1666.2 477.3 L1667.8 460.5 L1670.3 443.7 L1673.7 420.3 L1677 403.5 L1680.4 390.1 L1683.2 380 L1686.8 367 L1691.2 354.7 L1694.8 351.1 L1697 350.4 L1699.9 351.8 L1703.5 358.4 L1707.9 364.9 L1711.5 372.1 L1713.4 378.7 L1713.8 388.8 L1715.4 396.1 L1715.8 412 L1716.3 435.2 L1717 448.3 L1717.3 450 L1718 468.9 L1719 489.2 L1719.9 510.9 L1720.9 529.8 L1721.9 539.9 L1723.1 543.6 L1730.3 549.4 L1737.6 553 L1744.8 556.2 L1752.1 558.5 L1755.92 559.5 L1758.82 559.5 L1760.22 556.5 L1761.52 551 L1762.82 541 L1764.22 527 L1764.92 520.2 L1766.62 490.7 L1768.72 463.8 L1770.82 437 L1772.62 411.9 L1773.52 400 L1775.22 394 L1776.62 392.6 L1778.82 398.5 L1781.32 413.6 L1783.32 433.7 L1785.02 453.8 L1786.32 477.3 L1787.22 487.3 L1788.92 477.3 L1790.52 460.5 L1793.02 443.7 L1796.42 420.3 L1799.72 403.5 L1803.12 390.1 L1805.92 380 L1809.52 367 L1813.92 354.7 L1817.52 351.1 L1819.72 350.4 L1822.62 351.8 L1826.22 358.4 L1830.62 364.9 L1834.22 372.1 L1836.12 378.7 L1836.52 388.8 L1838.12 396.1 L1838.52 412 L1839.02 435.2 L1839.72 448.3 L1840.02 450 L1840.72 468.9 L1841.72 489.2 L1842.62 510.9 L1843.62 529.8 L1844.62 539.9 L1845.82 543.6 L1853.02 549.4 L1860.32 553 L1867.52 556.2 L1874.82 558.5 L1878.64 559.5 L1881.54 559.5 L1882.94 556.5 L1884.24 551 L1885.54 541 L1886.94 527 L1887.64 520.2 L1889.34 490.7 L1891.44 463.8 L1893.54 437 L1895.34 411.9 L1896.24 400 L1897.94 394 L1899.34 392.6 L1901.54 398.5 L1904.04 413.6 L1906.04 433.7 L1907.74 453.8 L1909.04 477.3 L1909.94 487.3 L1911.64 477.3 L1913.24 460.5 L1915.74 443.7 L1919.14 420.3 L1922.44 403.5 L1925.84 390.1 L1928.64 380 L1932.24 367 L1936.64 354.7 L1940.24 351.1 L1942.44 350.4 L1945.34 351.8 L1948.94 358.4 L1953.34 364.9 L1956.94 372.1 L1958.84 378.7 L1959.24 388.8 L1960.84 396.1 L1961.24 412 L1961.74 435.2 L1962.44 448.3 L1962.74 450 L1963.44 468.9 L1964.44 489.2 L1965.34 510.9 L1966.34 529.8 L1967.34 539.9 L1968.54 543.6 L1975.74 549.4 L1983.04 553 L1990.24 556.2 L1997.54 558.5" stroke="#0000ff" clip-path="url(#cp2)"/>
<path d="M896.88 559.5 L899.78 559.5 L901.18 556.5 L902.48 551 L903.78 541 L905.18 527 L905.88 520.2 L907.58 490.7 L909.68 463.8 L911.78 437 L913.58 411.9 L915.58 391.8 L916.88 384.5 L917.78 382.2 L919.08 383.2 L920.58 386.8 L922.28 400.2 L924.28 420.3 L925.98 437 L927.28 453.8 L928.98 477.3 L930.38 467.2 L932.38 447.1 L934.88 428.7 L937.38 411.9 L940.38 391.8 L943.28 376.7 L945.38 368.5 L948.28 356.2 L951.18 346.8 L954.88 338.1 L957.78 334.3 L960.38 333.3 L963.58 334.6 L966.48 338.1 L969.38 343.1 L972.28 346.8 L974.48 353.3 L976.28 361.3 L977.78 374.3 L978.38 385.9 L979.08 396.1 L979.48 412 L979.98 435.2 L980.68 448.3 L980.98 450 L981.68 468.9 L982.68 489.2 L983.58 510.9 L984.58 529.8 L985.58 539.9 L986.78 543.6 L993.98 549.4 L1001.28 553 L1008.48 556.2 L1015.78 558.5 L1019.6 559.5 L1022.5 559.5 L1023.9 556.5 L1025.2 551 L1026.5 541 L1027.9 527 L1028.6 520.2 L1030.3 490.7 L1032.4 463.8 L1034.5 437 L1036.3 411.9 L1038.3 391.8 L1039.6 384.5 L1040.5 382.2 L1041.8 383.2 L1043.3 386.8 L1045 400.2 L1047 420.3 L1048.7 437 L1050 453.8 L1051.7 477.3 L1053.1 467.2 L1055.1 447.1 L1057.6 428.7 L1060.1 411.9 L1063.1 391.8 L1066 376.7 L1068.1 368.5 L1071 356.2 L1073.9 346.8 L1077.6 338.1 L1080.5 334.3 L1083.1 333.3 L1086.3 334.6 L1089.2 338.1 L1092.1 343.1 L1095 346.8 L1097.2 353.3 L1099 361.3 L1100.5 374.3 L1101.1 385.9 L1101.8 396.1 L1102.2 412 L1102.7 435.2 L1103.4 448.3 L1103.7 450 L1104.4 468.9 L1105.4 489.2 L1106.3 510.9 L1107.3 529.8 L1108.3 539.9 L1109.5 543.6 L1116.7 549.4 L1124 553 L1131.2 556.2 L1138.5 558.5 L1142.32 559.5 L1145.22 559.5 L1146.62 556.5 L1147.92 551 L1149.22 541 L1150.62 527 L1151.32 520.2 L1153.02 490.7 L1155.12 463.8 L1157.22 437 L1159.02 411.9 L1161.02 391.8 L1162.32 384.5 L1163.22 382.2 L1164.52 383.2 L1166.02 386.8 L1167.72 400.2 L1169.72 420.3 L1171.42 437 L1172.72 453.8 L1174.42 477.3 L1175.82 467.2 L1177.82 447.1 L1180.32 428.7 L1182.82 411.9 L1185.82 391.8 L1188.72 376.7 L1190.82 368.5 L1193.72 356.2 L1196.62 346.8 L1200.32 338.1 L1203.22 334.3 L1205.82 333.3 L1209.02 334.6 L1211.92 338.1 L1214.82 343.1 L1217.72 346.8 L1219.92 353.3 L1221.72 361.3 L1223.22 374.3 L1223.82 385.9 L1224.52 396.1 L1224.92 412 L1225.42 435.2 L1226.12 448.3 L1226.42 450 L1227.12 468.9 L1228.12 489.2 L1229.02 510.9 L1230.02 529.8 L1231.02 539.9 L1232.22 543.6 L1239.42 549.4 L1246.72 553 L1253.92 556.2 L1261.22 558.5 L1265.04 559.5 L1267.94 559.5 L1269.34 556.5 L1270.64 551 L1271.94 541 L1273.34 527 L1274.04 520.2 L1275.74 490.7 L1277.84 463.8 L1279.94 437 L1281.74 411.9 L1283.74 391.8 L1285.04 384.5 L1285.94 382.2 L1287.24 383.2 L1288.74 386.8 L1290.44 400.2 L1292.44 420.3 L1294.14 437 L1295.44 453.8 L1297.14 477.3 L1298.54 467.2 L1300.54 447.1 L1303.04 428.7 L1305.54 411.9 L1308.54 391.8 L1311.44 376.7 L1313.54 368.5 L1316.44 356.2 L1319.34 346.8 L1323.04 338.1 L1325.94 334.3 L1328.54 333.3 L1331.74 334.6 L1334.64 338.1 L1337.54 343.1 L1340.44 346.8 L1342.64 353.3 L1344.44 361.3 L1345.94 374.3 L1346.54 385.9 L1347.24 396.1 L1347.64 412 L1348.14 435.2 L1348.84 448.3 L1349.14 450 L1349.84 468.9 L1350.84 489.2 L1351.74 510.9 L1352.74 529.8 L1353.74 539.9 L1354.94 543.6 L1362.14 549.4 L1369.44 553 L1376.64 556.2 L1383.94 558.5 L1387.76 559.5 L1390.66 559.5 L1392.06 556.5 L1393.36 551 L1394.66 541 L1396.06 527 L1396.76 520.2 L1398.46 490.7 L1400.56 463.8 L1402.66 437 L1404.46 411.9 L1406.46 391.8 L1407.76 384.5 L1408.66 382.2 L1409.96 383.2 L1411.46 386.8 L1413.16 400.2 L1415.16 420.3 L1416.86 437 L1418.16 453.8 L1419.86 477.3 L1421.26 467.2 L1423.26 447.1 L1425.76 428.7 L1428.26 411.9 L1431.26 391.8 L1434.16 376.7 L1436.26 368.5 L1439.16 356.2 L1442.06 346.8 L1445.76 338.1 L1448.66 334.3 L1451.26 333.3 L1454.46 334.6 L1457.36 338.1 L1460.26 343.1 L1463.16 346.8 L1465.36 353.3 L1467.16 361.3 L1468.66 374.3 L1469.26 385.9 L1469.96 396.1 L1470.36 412 L1470.86 435.2 L1471.56 448.3 L1471.86 450 L1472.56 468.9 L1473.56 489.2 L1474.46 510.9 L1475.46 529.8 L1476.46 539.9 L1477.66 543.6 L1484.86 549.4 L1492.16 553 L1499.36 556.2 L1506.66 558.5 L1510.48 559.5 L1513.38 559.5 L1514.78 556.5 L1516.08 551 L1517.38 541 L1518.78 527 L1519.48 520.2 L1521.18 490.7 L1523.28 463.8 L1525.38 437 L1527.18 411.9 L1529.18 391.8 L1530.48 384.5 L1531.38 382.2 L1532.68 383.2 L1534.18 386.8 L1535.88 400.2 L1537.88 420.3 L1539.58 437 L1540.88 453.8 L1542.58 477.3 L1543.98 467.2 L1545.98 447.1 L1548.48 428.7 L1550.98 411.9 L1553.98 391.8 L1556.88 376.7 L1558.98 368.5 L1561.88 356.2 L1564.78 346.8 L1568.48 338.1 L1571.38 334.3 L1573.98 333.3 L1577.18 334.6 L1580.08 338.1 L1582.98 343.1 L1585.88 346.8 L1588.08 353.3 L1589.88 361.3 L1591.38 374.3 L1591.98 385.9 L1592.68 396.1 L1593.08 412 L1593.58 435.2 L1594.28 448.3 L1594.58 450 L1595.28 468.9 L1596.28 489.2 L1597.18 510.9 L1598.18 529.8 L1599.18 539.9 L1600.38 543.6 L1607.58 549.4 L1614.88 553 L1622.08 556.2 L1629.38 558.5 L1633.2 559.5 L1636.1 559.5 L1637.5 556.5 L1638.8 551 L1640.1 541 L1641.5 527 L1642.2 520.2 L1643.9 490.7 L1646 463.8 L1648.1 437 L1649.9 411.9 L1651.9 391.8 L1653.2 384.5 L1654.1 382.2 L1655.4 383.2 L1656.9 386.8 L1658.6 400.2 L1660.6 420.3 L1662.3 437 L1663.6 453.8 L1665.3 477.3 L1666.7 467.2 L1668.7 447.1 L1671.2 428.7 L1673.7 411.9 L1676.7 391.8 L1679.6 376.7 L1681.7 368.5 L1684.6 356.2 L1687.5 346.8 L1691.2 338.1 L1694.1 334.3 L1696.7 333.3 L1699.9 334.6 L1702.8 338.1 L1705.7 343.1 L1708.6 346.8 L1710.8 353.3 L1712.6 361.3 L1714.1 374.3 L1714.7 385.9 L1715.4 396.1 L1715.8 412 L1716.3 435.2 L1717 448.3 L1717.3 450 L1718 468.9 L1719 489.2 L1719.9 510.9 L1720.9 529.8 L1721.9 539.9 L1723.1 543.6 L1730.3 549.4 L1737.6 553 L1744.8 556.2 L1752.1 558.5 L1755.92 559.5 L1758.82 559.5 L1760.22 556.5 L1761.52 551 L1762.82 541 L1764.22 527 L1764.92 520.2 L1766.62 490.7 L1768.72 463.8 L1770.82 437 L1772.62 411.9 L1774.62 391.8 L1775.92 384.5 L1776.82 382.2 L1778.12 383.2 L1779.62 386.8 L1781.32 400.2 L1783.32 420.3 L1785.02 437 L1786.32 453.8 L1788.02 477.3 L1789.42 467.2 L1791.42 447.1 L1793.92 428.7 L1796.42 411.9 L1799.42 391.8 L1802.32 376.7 L1804.42 368.5 L1807.32 356.2 L1810.22 346.8 L1813.92 338.1 L1816.82 334.3 L1819.42 333.3 L1822.62 334.6 L1825.52 338.1 L1828.42 343.1 L1831.32 346.8 L1833.52 353.3 L1835.32 361.3 L1836.82 374.3 L1837.42 385.9 L1838.12 396.1 L1838.52 412 L1839.02 435.2 L1839.72 448.3 L1840.02 450 L1840.72 468.9 L1841.72 489.2 L1842.62 510.9 L1843.62 529.8 L1844.62 539.9 L1845.82 543.6 L1853.02 549.4 L1860.32 553 L1867.52 556.2 L1874.82 558.5 L1878.64 559.5 L1881.54 559.5 L1882.94 556.5 L1884.24 551 L1885.54 541 L1886.94 527 L1887.64 520.2 L1889.34 490.7 L1891.44 463.8 L1893.54 437 L1895.34 411.9 L1897.34 391.8 L1898.64 384.5 L1899.54 382.2 L1900.84 383.2 L1902.34 386.8 L1904.04 400.2 L1906.04 420.3 L1907.74 437 L1909.04 453.8 L1910.74 477.3 L1912.14 467.2 L1914.14 447.1 L1916.64 428.7 L1919.14 411.9 L1922.14 391.8 L1925.04 376.7 L1927.14 368.5 L1930.04 356.2 L1932.94 346.8 L1936.64 338.1 L1939.54 334.3 L1942.14 333.3 L1945.34 334.6 L1948.24 338.1 L1951.14 343.1 L1954.04 346.8 L1956.24 353.3 L1958.04 361.3 L1959.54 374.3 L1960.14 385.9 L1960.84 396.1 L1961.24 412 L1961.74 435.2 L1962.44 448.3 L1962.74 450 L1963.44 468.9 L1964.44 489.2 L1965.34 510.9 L1966.34 529.8 L1967.34 539.9 L1968.54 543.6 L1975.74 549.4 L1983.04 553 L1990.24 556.2 L1997.54 558.5" stroke="#ff0000" clip-path="url(#cp2)"/>
<path d="M896.88 766.4 L897.98 756.9 L899.88 739.5 L901.58 725 L901.88 722.6 L903.38 706.7 L905.53 686.4 L907.68 669 L909.88 657.4 L912.78 648.7 L914.98 645.8 L917.18 645 L919.28 646.5 L921.48 650.1 L925.58 664.6 L930.18 657.4 L938.88 647.9 L941.78 635.6 L946.18 623.3 L948.48 621 L950.48 620.4 L952.48 621.3 L954.88 624 L959.18 635.6 L962.88 648.7 L964.98 657.4 L968.68 664.6 L973.68 670.4 L979.48 676.2 L981.68 687.8 L983.88 705.2 L986.08 722.6 L988.18 742.4 L989.98 762.7 L991.88 783 L993.98 801.9 L996.18 817.8 L998.38 830.9 L1000.58 839.6 L1003.88 844.7 L1007.08 841 L1009.98 833.8 L1012.18 823.6 L1014.28 810.6 L1016.48 794.6 L1018.68 775.8 L1019.6 766.4 L1020.7 756.9 L1022.6 739.5 L1024.3 725 L1024.6 722.6 L1026.1 706.7 L1028.25 686.4 L1030.4 669 L1032.6 657.4 L1035.5 648.7 L1037.7 645.8 L1039.9 645 L1042 646.5 L1044.2 650.1 L1048.3 664.6 L1052.9 657.4 L1061.6 647.9 L1064.5 635.6 L1068.9 623.3 L1071.2 621 L1073.2 620.4 L1075.2 621.3 L1077.6 624 L1081.9 635.6 L1085.6 648.7 L1087.7 657.4 L1091.4 664.6 L1096.4 670.4 L1102.2 676.2 L1104.4 687.8 L1106.6 705.2 L1108.8 722.6 L1110.9 742.4 L1112.7 762.7 L1114.6 783 L1116.7 801.9 L1118.9 817.8 L1121.1 830.9 L1123.3 839.6 L1126.6 844.7 L1129.8 841 L1132.7 833.8 L1134.9 823.6 L1137 810.6 L1139.2 794.6 L1141.4 775.8 L1142.32 766.4 L1143.42 756.9 L1145.32 739.5 L1147.02 725 L1147.32 722.6 L1148.82 706.7 L1150.97 686.4 L1153.12 669 L1155.32 657.4 L1158.22 648.7 L1160.42 645.8 L1162.62 645 L1164.72 646.5 L1166.92 650.1 L1171.02 664.6 L1175.62 657.4 L1184.32 647.9 L1187.22 635.6 L1191.62 623.3 L1193.92 621 L1195.92 620.4 L1197.92 621.3 L1200.32 624 L1204.62 635.6 L1208.32 648.7 L1210.42 657.4 L1214.12 664.6 L1219.12 670.4 L1224.92 676.2 L1227.12 687.8 L1229.32 705.2 L1231.52 722.6 L1233.62 742.4 L1235.42 762.7 L1237.32 783 L1239.42 801.9 L1241.62 817.8 L1243.82 830.9 L1246.02 839.6 L1249.32 844.7 L1252.52 841 L1255.42 833.8 L1257.62 823.6 L1259.72 810.6 L1261.92 794.6 L1264.12 775.8 L1265.04 766.4 L1266.14 756.9 L1268.04 739.5 L1269.74 725 L1270.04 722.6 L1271.54 706.7 L1273.69 686.4 L1275.84 669 L1278.04 657.4 L1280.94 648.7 L1283.14 645.8 L1285.34 645 L1287.44 646.5 L1289.64 650.1 L1293.74 664.6 L1298.34 657.4 L1307.04 647.9 L1309.94 635.6 L1314.34 623.3 L1316.64 621 L1318.64 620.4 L1320.64 621.3 L1323.04 624 L1327.34 635.6 L1331.04 648.7 L1333.14 657.4 L1336.84 664.6 L1341.84 670.4 L1347.64 676.2 L1349.84 687.8 L1352.04 705.2 L1354.24 722.6 L1356.34 742.4 L1358.14 762.7 L1360.04 783 L1362.14 801.9 L1364.34 817.8 L1366.54 830.9 L1368.74 839.6 L1372.04 844.7 L1375.24 841 L1378.14 833.8 L1380.34 823.6 L1382.44 810.6 L1384.64 794.6 L1386.84 775.8 L1387.76 766.4 L1388.86 756.9 L1390.76 739.5 L1392.46 725 L1392.76 722.6 L1394.26 706.7 L1396.41 686.4 L1398.56 669 L1400.76 657.4 L1403.66 648.7 L1405.86 645.8 L1408.06 645 L1410.16 646.5 L1412.36 650.1 L1416.46 664.6 L1421.06 657.4 L1429.76 647.9 L1432.66 635.6 L1437.06 623.3 L1439.36 621 L1441.36 620.4 L1443.36 621.3 L1445.76 624 L1450.06 635.6 L1453.76 648.7 L1455.86 657.4 L1459.56 664.6 L1464.56 670.4 L1470.36 676.2 L1472.56 687.8 L1474.76 705.2 L1476.96 722.6 L1479.06 742.4 L1480.86 762.7 L1482.76 783 L1484.86 801.9 L1487.06 817.8 L1489.26 830.9 L1491.46 839.6 L1494.76 844.7 L1497.96 841 L1500.86 833.8 L1503.06 823.6 L1505.16 810.6 L1507.36 794.6 L1509.56 775.8 L1510.48 766.4 L1511.58 756.9 L1513.48 739.5 L1515.18 725 L1515.48 722.6 L1516.98 706.7 L1519.13 686.4 L1521.28 669 L1523.48 657.4 L1526.38 648.7 L1528.58 645.8 L1530.78 645 L1532.88 646.5 L1535.08 650.1 L1539.18 664.6 L1543.78 657.4 L1552.48 647.9 L1555.38 635.6 L1559.78 623.3 L1562.08 621 L1564.08 620.4 L1566.08 621.3 L1568.48 624 L1572.78 635.6 L1576.48 648.7 L1578.58 657.4 L1582.28 664.6 L1587.28 670.4 L1593.08 676.2 L1595.28 687.8 L1597.48 705.2 L1599.68 722.6 L1601.78 742.4 L1603.58 762.7 L1605.48 783 L1607.58 801.9 L1609.78 817.8 L1611.98 830.9 L1614.18 839.6 L1617.48 844.7 L1620.68 841 L1623.58 833.8 L1625.78 823.6 L1627.88 810.6 L1630.08 794.6 L1632.28 775.8 L1633.2 766.4 L1634.3 756.9 L1636.2 739.5 L1637.9 725 L1638.2 722.6 L1639.7 706.7 L1641.85 686.4 L1644 669 L1646.2 657.4 L1649.1 648.7 L1651.3 645.8 L1653.5 645 L1655.6 646.5 L1657.8 650.1 L1661.9 664.6 L1666.5 657.4 L1675.2 647.9 L1678.1 635.6 L1682.5 623.3 L1684.8 621 L1686.8 620.4 L1688.8 621.3 L1691.2 624 L1695.5 635.6 L1699.2 648.7 L1701.3 657.4 L1705 664.6 L1710 670.4 L1715.8 676.2 L1718 687.8 L1720.2 705.2 L1722.4 722.6 L1724.5 742.4 L1726.3 762.7 L1728.2 783 L1730.3 801.9 L1732.5 817.8 L1734.7 830.9 L1736.9 839.6 L1740.2 844.7 L1743.4 841 L1746.3 833.8 L1748.5 823.6 L1750.6 810.6 L1752.8 794.6 L1755 775.8 L1755.92 766.4 L1757.02 756.9 L1758.92 739.5 L1760.62 725 L1760.92 722.6 L1762.42 706.7 L1764.57 686.4 L1766.72 669 L1768.92 657.4 L1771.82 648.7 L1774.02 645.8 L1776.22 645 L1778.32 646.5 L1780.52 650.1 L1784.62 664.6 L1789.22 657.4 L1797.92 647.9 L1800.82 635.6 L1805.22 623.3 L1807.52 621 L1809.52 620.4 L1811.52 621.3 L1813.92 624 L1818.22 635.6 L1821.92 648.7 L1824.02 657.4 L1827.72 664.6 L1832.72 670.4 L1838.52 676.2 L1840.72 687.8 L1842.92 705.2 L1845.12 722.6 L1847.22 742.4 L1849.02 762.7 L1850.92 783 L1853.02 801.9 L1855.22 817.8 L1857.42 830.9 L1859.62 839.6 L1862.92 844.7 L1866.12 841 L1869.02 833.8 L1871.22 823.6 L1873.32 810.6 L1875.52 794.6 L1877.72 775.8 L1878.64 766.4 L1879.74 756.9 L1881.64 739.5 L1883.34 725 L1883.64 722.6 L1885.14 706.7 L1887.29 686.4 L1889.44 669 L1891.64 657.4 L1894.54 648.7 L1896.74 645.8 L1898.94 645 L1901.04 646.5 L1903.24 650.1 L1907.34 664.6 L1911.94 657.4 L1920.64 647.9 L1923.54 635.6 L1927.94 623.3 L1930.24 621 L1932.24 620.4 L1934.24 621.3 L1936.64 624 L1940.94 635.6 L1944.64 648.7 L1946.74 657.4 L1950.44 664.6 L1955.44 670.4 L1961.24 676.2 L1963.44 687.8 L1965.64 705.2 L1967.84 722.6 L1969.94 742.4 L1971.74 762.7 L1973.64 783 L1975.74 801.9 L1977.94 817.8 L1980.14 830.9 L1982.34 839.6 L1985.64 844.7 L1988.84 841 L1991.74 833.8 L1993.94 823.6 L1996.04 810.6 L1998.24 794.6 L2000.44 775.8" stroke="#00ff00" clip-path="url(#cp3)"/>
<path d="M896.88 766.4 L897.98 756.9 L899.88 739.5 L901.58 725 L901.88 722.6 L903.38 706.7 L905.53 686.4 L907.68 669 L909.88 657.4 L912.78 647.2 L915.68 642 L918.58 640.7 L921.98 642.5 L925.48 649.5 L928.28 658.1 L930.48 653 L934.58 647.8 L940.38 642.3 L944.68 639.2 L948.48 634.5 L951.98 631.3 L954.88 635 L957.78 641.4 L962.08 650.1 L966.48 657.4 L972.28 661.7 L977.38 667.5 L979.48 676.2 L981.68 687.8 L983.88 705.2 L986.08 722.6 L988.18 742.4 L989.98 762.7 L991.88 783 L993.98 801.9 L996.18 817.8 L998.38 830.9 L1000.58 839.6 L1003.88 844.7 L1007.08 841 L1009.98 833.8 L1012.18 823.6 L1014.28 810.6 L1016.48 794.6 L1018.68 775.8 L1019.6 766.4 L1020.7 756.9 L1022.6 739.5 L1024.3 725 L1024.6 722.6 L1026.1 706.7 L1028.25 686.4 L1030.4 669 L1032.6 657.4 L1035.5 647.2 L1038.4 642 L1041.3 640.7 L1044.7 642.5 L1048.2 649.5 L1051 658.1 L1053.2 653 L1057.3 647.8 L1063.1 642.3 L1067.4 639.2 L1071.2 634.5 L1074.7 631.3 L1077.6 635 L1080.5 641.4 L1084.8 650.1 L1089.2 657.4 L1095 661.7 L1100.1 667.5 L1102.2 676.2 L1104.4 687.8 L1106.6 705.2 L1108.8 722.6 L1110.9 742.4 L1112.7 762.7 L1114.6 783 L1116.7 801.9 L1118.9 817.8 L1121.1 830.9 L1123.3 839.6 L1126.6 844.7 L1129.8 841 L1132.7 833.8 L1134.9 823.6 L1137 810.6 L1139.2 794.6 L1141.4 775.8 L1142.32 766.4 L1143.42 756.9 L1145.32 739.5 L1147.02 725 L1147.32 722.6 L1148.82 706.7 L1150.97 686.4 L1153.12 669 L1155.32 657.4 L1158.22 647.2 L1161.12 642 L1164.02 640.7 L1167.42 642.5 L1170.92 649.5 L1173.72 658.1 L1175.92 653 L1180.02 647.8 L1185.82 642.3 L1190.12 639.2 L1193.92 634.5 L1197.42 631.3 L1200.32 635 L1203.22 641.4 L1207.52 650.1 L1211.92 657.4 L1217.72 661.7 L1222.82 667.5 L1224.92 676.2 L1227.12 687.8 L1229.32 705.2 L1231.52 722.6 L1233.62 742.4 L1235.42 762.7 L1237.32 783 L1239.42 801.9 L1241.62 817.8 L1243.82 830.9 L1246.02 839.6 L1249.32 844.7 L1252.52 841 L1255.42 833.8 L1257.62 823.6 L1259.72 810.6 L1261.92 794.6 L1264.12 775.8 L1265.04 766.4 L1266.14 756.9 L1268.04 739.5 L1269.74 725 L1270.04 722.6 L1271.54 706.7 L1273.69 686.4 L1275.84 669 L1278.04 657.4 L1280.94 647.2 L1283.84 642 L1286.74 640.7 L1290.14 642.5 L1293.64 649.5 L1296.44 658.1 L1298.64 653 L1302.74 647.8 L1308.54 642.3 L1312.84 639.2 L1316.64 634.5 L1320.14 631.3 L1323.04 635 L1325.94 641.4 L1330.24 650.1 L1334.64 657.4 L1340.44 661.7 L1345.54 667.5 L1347.64 676.2 L1349.84 687.8 L1352.04 705.2 L1354.24 722.6 L1356.34 742.4 L1358.14 762.7 L1360.04 783 L1362.14 801.9 L1364.34 817.8 L1366.54 830.9 L1368.74 839.6 L1372.04 844.7 L1375.24 841 L1378.14 833.8 L1380.34 823.6 L1382.44 810.6 L1384.64 794.6 L1386.84 775.8 L1387.76 766.4 L1388.86 756.9 L1390.76 739.5 L1392.46 725 L1392.76 722.6 L1394.26 706.7 L1396.41 686.4 L1398.56 669 L1400.76 657.4 L1403.66 647.2 L1406.56 642 L1409.46 640.7 L1412.86 642.5 L1416.36 649.5 L1419.16 658.1 L1421.36 653 L1425.46 647.8 L1431.26 642.3 L1435.56 639.2 L1439.36 634.5 L1442.86 631.3 L1445.76 635 L1448.66 641.4 L1452.96 650.1 L1457.36 657.4 L1463.16 661.7 L1468.26 667.5 L1470.36 676.2 L1472.56 687.8 L1474.76 705.2 L1476.96 722.6 L1479.06 742.4 L1480.86 762.7 L1482.76 783 L1484.86 801.9 L1487.06 817.8 L1489.26 830.9 L1491.46 839.6 L1494.76 844.7 L1497.96 841 L1500.86 833.8 L1503.06 823.6 L1505.16 810.6 L1507.36 794.6 L1509.56 775.8 L1510.48 766.4 L1511.58 756.9 L1513.48 739.5 L1515.18 725 L1515.48 722.6 L1516.98 706.7 L1519.13 686.4 L1521.28 669 L1523.48 657.4 L1526.38 647.2 L1529.28 642 L1532.18 640.7 L1535.58 642.5 L1539.08 649.5 L1541.88 658.1 L1544.08 653 L1548.18 647.8 L1553.98 642.3 L1558.28 639.2 L1562.08 634.5 L1565.58 631.3 L1568.48 635 L1571.38 641.4 L1575.68 650.1 L1580.08 657.4 L1585.88 661.7 L1590.98 667.5 L1593.08 676.2 L1595.28 687.8 L1597.48 705.2 L1599.68 722.6 L1601.78 742.4 L1603.58 762.7 L1605.48 783 L1607.58 801.9 L1609.78 817.8 L1611.98 830.9 L1614.18 839.6 L1617.48 844.7 L1620.68 841 L1623.58 833.8 L1625.78 823.6 L1627.88 810.6 L1630.08 794.6 L1632.28 775.8 L1633.2 766.4 L1634.3 756.9 L1636.2 739.5 L1637.9 725 L1638.2 722.6 L1639.7 706.7 L1641.85 686.4 L1644 669 L1646.2 657.4 L1649.1 647.2 L1652 642 L1654.9 640.7 L1658.3 642.5 L1661.8 649.5 L1664.6 658.1 L1666.8 653 L1670.9 647.8 L1676.7 642.3 L1681 639.2 L1684.8 634.5 L1688.3 631.3 L1691.2 635 L1694.1 641.4 L1698.4 650.1 L1702.8 657.4 L1708.6 661.7 L1713.7 667.5 L1715.8 676.2 L1718 687.8 L1720.2 705.2 L1722.4 722.6 L1724.5 742.4 L1726.3 762.7 L1728.2 783 L1730.3 801.9 L1732.5 817.8 L1734.7 830.9 L1736.9 839.6 L1740.2 844.7 L1743.4 841 L1746.3 833.8 L1748.5 823.6 L1750.6 810.6 L1752.8 794.6 L1755 775.8 L1755.92 766.4 L1757.02 756.9 L1758.92 739.5 L1760.62 725 L1760.92 722.6 L1762.42 706.7 L1764.57 686.4 L1766.72 669 L1768.92 657.4 L1771.82 647.2 L1774.72 642 L1777.62 640.7 L1781.02 642.5 L1784.52 649.5 L1787.32 658.1 L1789.52 653 L1793.62 647.8 L1799.42 642.3 L1803.72 639.2 L1807.52 634.5 L1811.02 631.3 L1813.92 635 L1816.82 641.4 L1821.12 650.1 L1825.52 657.4 L1831.32 661.7 L1836.42 667.5 L1838.52 676.2 L1840.72 687.8 L1842.92 705.2 L1845.12 722.6 L1847.22 742.4 L1849.02 762.7 L1850.92 783 L1853.02 801.9 L1855.22 817.8 L1857.42 830.9 L1859.62 839.6 L1862.92 844.7 L1866.12 841 L1869.02 833.8 L1871.22 823.6 L1873.32 810.6 L1875.52 794.6 L1877.72 775.8 L1878.64 766.4 L1879.74 756.9 L1881.64 739.5 L1883.34 725 L1883.64 722.6 L1885.14 706.7 L1887.29 686.4 L1889.44 669 L1891.64 657.4 L1894.54 647.2 L1897.44 642 L1900.34 640.7 L1903.74 642.5 L1907.24 649.5 L1910.04 658.1 L1912.24 653 L1916.34 647.8 L1922.14 642.3 L1926.44 639.2 L1930.24 634.5 L1933.74 631.3 L1936.64 635 L1939.54 641.4 L1943.84 650.1 L1948.24 657.4 L1954.04 661.7 L1959.14 667.5 L1961.24 676.2 L1963.44 687.8 L1965.64 705.2 L1967.84 722.6 L1969.94 742.4 L1971.74 762.7 L1973.64 783 L1975.74 801.9 L1977.94 817.8 L1980.14 830.9 L1982.34 839.6 L1985.64 844.7 L1988.84 841 L1991.74 833.8 L1993.94 823.6 L1996.04 810.6 L1998.24 794.6 L2000.44 775.8" stroke="#0000ff" clip-path="url(#cp3)"/>
<path d="M896.88 766.4 L897.98 756.9 L899.88 739.5 L901.58 725 L901.88 722.6 L903.38 706.7 L905.53 686.4 L907.68 669 L909.88 657.4 L912.78 647.2 L915.68 640.7 L917.48 638.9 L919.28 638.2 L921.18 638.8 L922.98 640 L925.88 647.2 L927.98 655.9 L930.18 651.6 L934.58 647.2 L940.38 642.1 L946.18 638.5 L950.48 635.9 L952.68 635.3 L954.88 637.1 L957.78 642.9 L962.08 648.7 L966.48 654.5 L970.78 657.4 L974.48 661.7 L977.38 666.8 L979.48 676.2 L981.68 687.8 L983.88 705.2 L986.08 722.6 L988.18 742.4 L989.98 762.7 L991.88 783 L993.98 801.9 L996.18 817.8 L998.38 830.9 L1000.58 839.6 L1003.88 844.7 L1007.08 841 L1009.98 833.8 L1012.18 823.6 L1014.28 810.6 L1016.48 794.6 L1018.68 775.8 L1019.6 766.4 L1020.7 756.9 L1022.6 739.5 L1024.3 725 L1024.6 722.6 L1026.1 706.7 L1028.25 686.4 L1030.4 669 L1032.6 657.4 L1035.5 647.2 L1038.4 640.7 L1040.2 638.9 L1042 638.2 L1043.9 638.8 L1045.7 640 L1048.6 647.2 L1050.7 655.9 L1052.9 651.6 L1057.3 647.2 L1063.1 642.1 L1068.9 638.5 L1073.2 635.9 L1075.4 635.3 L1077.6 637.1 L1080.5 642.9 L1084.8 648.7 L1089.2 654.5 L1093.5 657.4 L1097.2 661.7 L1100.1 666.8 L1102.2 676.2 L1104.4 687.8 L1106.6 705.2 L1108.8 722.6 L1110.9 742.4 L1112.7 762.7 L1114.6 783 L1116.7 801.9 L1118.9 817.8 L1121.1 830.9 L1123.3 839.6 L1126.6 844.7 L1129.8 841 L1132.7 833.8 L1134.9 823.6 L1137 810.6 L1139.2 794.6 L1141.4 775.8 L1142.32 766.4 L1143.42 756.9 L1145.32 739.5 L1147.02 725 L1147.32 722.6 L1148.82 706.7 L1150.97 686.4 L1153.12 669 L1155.32 657.4 L1158.22 647.2 L1161.12 640.7 L1162.92 638.9 L1164.72 638.2 L1166.62 638.8 L1168.42 640 L1171.32 647.2 L1173.42 655.9 L1175.62 651.6 L1180.02 647.2 L1185.82 642.1 L1191.62 638.5 L1195.92 635.9 L1198.12 635.3 L1200.32 637.1 L1203.22 642.9 L1207.52 648.7 L1211.92 654.5 L1216.22 657.4 L1219.92 661.7 L1222.82 666.8 L1224.92 676.2 L1227.12 687.8 L1229.32 705.2 L1231.52 722.6 L1233.62 742.4 L1235.42 762.7 L1237.32 783 L1239.42 801.9 L1241.62 817.8 L1243.82 830.9 L1246.02 839.6 L1249.32 844.7 L1252.52 841 L1255.42 833.8 L1257.62 823.6 L1259.72 810.6 L1261.92 794.6 L1264.12 775.8 L1265.04 766.4 L1266.14 756.9 L1268.04 739.5 L1269.74 725 L1270.04 722.6 L1271.54 706.7 L1273.69 686.4 L1275.84 669 L1278.04 657.4 L1280.94 647.2 L1283.84 640.7 L1285.64 638.9 L1287.44 638.2 L1289.34 638.8 L1291.14 640 L1294.04 647.2 L1296.14 655.9 L1298.34 651.6 L1302.74 647.2 L1308.54 642.1 L1314.34 638.5 L1318.64 635.9 L1320.84 635.3 L1323.04 637.1 L1325.94 642.9 L1330.24 648.7 L1334.64 654.5 L1338.94 657.4 L1342.64 661.7 L1345.54 666.8 L1347.64 676.2 L1349.84 687.8 L1352.04 705.2 L1354.24 722.6 L1356.34 742.4 L1358.14 762.7 L1360.04 783 L1362.14 801.9 L1364.34 817.8 L1366.54 830.9 L1368.74 839.6 L1372.04 844.7 L1375.24 841 L1378.14 833.8 L1380.34 823.6 L1382.44 810.6 L1384.64 794.6 L1386.84 775.8 L1387.76 766.4 L1388.86 756.9 L1390.76 739.5 L1392.46 725 L1392.76 722.6 L1394.26 706.7 L1396.41 686.4 L1398.56 669 L1400.76 657.4 L1403.66 647.2 L1406.56 640.7 L1408.36 638.9 L1410.16 638.2 L1412.06 638.8 L1413.86 640 L1416.76 647.2 L1418.86 655.9 L1421.06 651.6 L1425.46 647.2 L1431.26 642.1 L1437.06 638.5 L1441.36 635.9 L1443.56 635.3 L1445.76 637.1 L1448.66 642.9 L1452.96 648.7 L1457.36 654.5 L1461.66 657.4 L1465.36 661.7 L1468.26 666.8 L1470.36 676.2 L1472.56 687.8 L1474.76 705.2 L1476.96 722.6 L1479.06 742.4 L1480.86 762.7 L1482.76 783 L1484.86 801.9 L1487.06 817.8 L1489.26 830.9 L1491.46 839.6 L1494.76 844.7 L1497.96 841 L1500.86 833.8 L1503.06 823.6 L1505.16 810.6 L1507.36 794.6 L1509.56 775.8 L1510.48 766.4 L1511.58 756.9 L1513.48 739.5 L1515.18 725 L1515.48 722.6 L1516.98 706.7 L1519.13 686.4 L1521.28 669 L1523.48 657.4 L1526.38 647.2 L1529.28 640.7 L1531.08 638.9 L1532.88 638.2 L1534.78 638.8 L1536.58 640 L1539.48 647.2 L1541.58 655.9 L1543.78 651.6 L1548.18 647.2 L1553.98 642.1 L1559.78 638.5 L1564.08 635.9 L1566.28 635.3 L1568.48 637.1 L1571.38 642.9 L1575.68 648.7 L1580.08 654.5 L1584.38 657.4 L1588.08 661.7 L1590.98 666.8 L1593.08 676.2 L1595.28 687.8 L1597.48 705.2 L1599.68 722.6 L1601.78 742.4 L1603.58 762.7 L1605.48 783 L1607.58 801.9 L1609.78 817.8 L1611.98 830.9 L1614.18 839.6 L1617.48 844.7 L1620.68 841 L1623.58 833.8 L1625.78 823.6 L1627.88 810.6 L1630.08 794.6 L1632.28 775.8 L1633.2 766.4 L1634.3 756.9 L1636.2 739.5 L1637.9 725 L1638.2 722.6 L1639.7 706.7 L1641.85 686.4 L1644 669 L1646.2 657.4 L1649.1 647.2 L1652 640.7 L1653.8 638.9 L1655.6 638.2 L1657.5 638.8 L1659.3 640 L1662.2 647.2 L1664.3 655.9 L1666.5 651.6 L1670.9 647.2 L1676.7 642.1 L1682.5 638.5 L1686.8 635.9 L1689 635.3 L1691.2 637.1 L1694.1 642.9 L1698.4 648.7 L1702.8 654.5 L1707.1 657.4 L1710.8 661.7 L1713.7 666.8 L1715.8 676.2 L1718 687.8 L1720.2 705.2 L1722.4 722.6 L1724.5 742.4 L1726.3 762.7 L1728.2 783 L1730.3 801.9 L1732.5 817.8 L1734.7 830.9 L1736.9 839.6 L1740.2 844.7 L1743.4 841 L1746.3 833.8 L1748.5 823.6 L1750.6 810.6 L1752.8 794.6 L1755 775.8 L1755.92 766.4 L1757.02 756.9 L1758.92 739.5 L1760.62 725 L1760.92 722.6 L1762.42 706.7 L1764.57 686.4 L1766.72 669 L1768.92 657.4 L1771.82 647.2 L1774.72 640.7 L1776.52 638.9 L1778.32 638.2 L1780.22 638.8 L1782.02 640 L1784.92 647.2 L1787.02 655.9 L1789.22 651.6 L1793.62 647.2 L1799.42 642.1 L1805.22 638.5 L1809.52 635.9 L1811.72 635.3 L1813.92 637.1 L1816.82 642.9 L1821.12 648.7 L1825.52 654.5 L1829.82 657.4 L1833.52 661.7 L1836.42 666.8 L1838.52 676.2 L1840.72 687.8 L1842.92 705.2 L1845.12 722.6 L1847.22 742.4 L1849.02 762.7 L1850.92 783 L1853.02 801.9 L1855.22 817.8 L1857.42 830.9 L1859.62 839.6 L1862.92 844.7 L1866.12 841 L1869.02 833.8 L1871.22 823.6 L1873.32 810.6 L1875.52 794.6 L1877.72 775.8 L1878.64 766.4 L1879.74 756.9 L1881.64 739.5 L1883.34 725 L1883.64 722.6 L1885.14 706.7 L1887.29 686.4 L1889.44 669 L1891.64 657.4 L1894.54 647.2 L1897.44 640.7 L1899.24 638.9 L1901.04 638.2 L1902.94 638.8 L1904.74 640 L1907.64 647.2 L1909.74 655.9 L1911.94 651.6 L1916.34 647.2 L1922.14 642.1 L1927.94 638.5 L1932.24 635.9 L1934.44 635.3 L1936.64 637.1 L1939.54 642.9 L1943.84 648.7 L1948.24 654.5 L1952.54 657.4 L1956.24 661.7 L1959.14 666.8 L1961.24 676.2 L1963.44 687.8 L1965.64 705.2 L1967.84 722.6 L1969.94 742.4 L1971.74 762.7 L1973.64 783 L1975.74 801.9 L1977.94 817.8 L1980.14 830.9 L1982.34 839.6 L1985.64 844.7 L1988.84 841 L1991.74 833.8 L1993.94 823.6 L1996.04 810.6 L1998.24 794.6 L2000.44 775.8" stroke="#ff0000" clip-path="url(#cp3)"/></g>
<g font-family="'Liberation Sans',Arial,sans-serif" font-weight="bold" font-size="16.1" fill="#b8b8b8"><text x="1010.3" y="67.4" text-anchor="end">50V</text>
<text x="1010.3" y="92.4" text-anchor="end">40V</text>
<text x="1010.3" y="116.4" text-anchor="end">30V</text>
<text x="1010.3" y="141.4" text-anchor="end">20V</text>
<text x="1010.3" y="165.4" text-anchor="end">10V</text>
<text x="1010.3" y="190.4" text-anchor="end">0V</text>
<text x="1010.3" y="215.4" text-anchor="end">-10V</text>
<text x="1010.3" y="239.4" text-anchor="end">-20V</text>
<text x="1010.3" y="264.4" text-anchor="end">-30V</text>
<text x="1010.3" y="288.4" text-anchor="end">-40V</text>
<text x="1010.3" y="313.4" text-anchor="end">-50V</text>
<text x="1010.3" y="337.4" text-anchor="end">4.4A</text>
<text x="1010.3" y="358.4" text-anchor="end">4.0A</text>
<text x="1010.3" y="378.4" text-anchor="end">3.6A</text>
<text x="1010.3" y="399.4" text-anchor="end">3.2A</text>
<text x="1010.3" y="419.4" text-anchor="end">2.8A</text>
<text x="1010.3" y="440.4" text-anchor="end">2.4A</text>
<text x="1010.3" y="460.4" text-anchor="end">2.0A</text>
<text x="1010.3" y="481.4" text-anchor="end">1.6A</text>
<text x="1010.3" y="502.4" text-anchor="end">1.2A</text>
<text x="1010.3" y="522.4" text-anchor="end">0.8A</text>
<text x="1010.3" y="543.4" text-anchor="end">0.4A</text>
<text x="1010.3" y="563.4" text-anchor="end">0.0A</text>
<text x="1010.3" y="584.4" text-anchor="end">-0.4A</text>
<text x="1010.3" y="608.4" text-anchor="end">5.6V</text>
<text x="1010.3" y="629.4" text-anchor="end">5.2V</text>
<text x="1010.3" y="650.4" text-anchor="end">4.8V</text>
<text x="1010.3" y="670.4" text-anchor="end">4.4V</text>
<text x="1010.3" y="691.4" text-anchor="end">4.0V</text>
<text x="1010.3" y="712.4" text-anchor="end">3.6V</text>
<text x="1010.3" y="733.4" text-anchor="end">3.2V</text>
<text x="1010.3" y="754.4" text-anchor="end">2.8V</text>
<text x="1010.3" y="775.4" text-anchor="end">2.4V</text>
<text x="1010.3" y="796.4" text-anchor="end">2.0V</text>
<text x="1010.3" y="816.4" text-anchor="end">1.6V</text>
<text x="1010.3" y="837.4" text-anchor="end">1.2V</text>
<text x="1010.3" y="858.4" text-anchor="end">0.8V</text>
<text x="1019.5" y="876.3" text-anchor="middle">0ns</text>
<text x="1105.5" y="876.3" text-anchor="middle">100ns</text>
<text x="1191.5" y="876.3" text-anchor="middle">200ns</text>
<text x="1277.5" y="876.3" text-anchor="middle">300ns</text>
<text x="1363.5" y="876.3" text-anchor="middle">400ns</text>
<text x="1448.5" y="876.3" text-anchor="middle">500ns</text>
<text x="1534.5" y="876.3" text-anchor="middle">600ns</text>
<text x="1620.5" y="876.3" text-anchor="middle">700ns</text>
<text x="1706.5" y="876.3" text-anchor="middle">800ns</text>
<text x="1792.5" y="876.3" text-anchor="middle">900ns</text></g>
<g font-family="'Liberation Sans',Arial,sans-serif" font-weight="bold" font-size="16.4" fill="#00ff00" text-anchor="middle"><text x="1447.2" y="54.8" textLength="48.6" lengthAdjust="spacingAndGlyphs">V(out)</text><text x="1447.8" y="324.8" textLength="63" lengthAdjust="spacingAndGlyphs">Ix(U1:D)</text><text x="1447.2" y="596" textLength="32.3" lengthAdjust="spacingAndGlyphs">V(g)</text></g>
</g>
</svg>
</body></html>
